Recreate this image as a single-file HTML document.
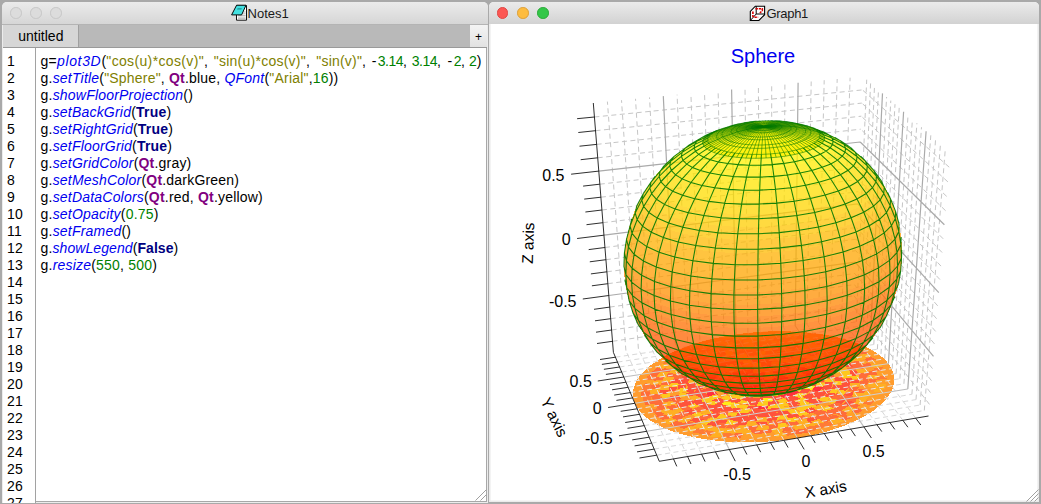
<!DOCTYPE html>
<html><head><meta charset="utf-8"><title>Sphere</title>
<style>
html,body{margin:0;padding:0}
body{width:1041px;height:504px;background:#a9a9a9;position:relative;overflow:hidden;font-family:"Liberation Sans",sans-serif;}
.win{position:absolute;top:2px;background:#fff;border-radius:5px 5px 0 0;overflow:hidden}
#w1{left:2px;width:485.5px;height:500.6px;background:#ececec}
#w2{left:489px;width:550px;height:499.6px;background:#fff;box-shadow:inset 1.6px 0 #ebebeb,inset -1.6px 0 #ebebeb,inset 0 -1.6px #ebebeb}
.tb{position:absolute;left:0;top:0;right:0;height:22px;background:linear-gradient(#ebebeb,#d6d6d6);border-bottom:1px solid #b4b4b4}
.tl{position:absolute;top:5.1px;width:11.6px;height:11.6px;border-radius:50%;border:1px solid #c6c6c6;background:#dcdcdc;box-sizing:border-box}
.ttl{position:absolute;top:4px;font-size:13px;line-height:15px;color:#1a1a1a;white-space:nowrap}
#tabbar{position:absolute;left:1px;top:23px;width:484px;height:22px;background:#b9b9b9;border-bottom:1px solid #9a9a9a}
#tab{position:absolute;left:0;top:0;width:75px;height:22px;background:#d6d6d6;border-right:1px solid #a0a0a0;font-size:14px;line-height:23px}
#tab span{position:absolute;left:15.3px;top:0}
#plus{position:absolute;right:0;top:0;width:17px;height:22px;background:linear-gradient(#f4f4f4,#e2e2e2);font-size:12px;line-height:25px;text-align:center}
#ed{position:absolute;left:1px;top:46px;width:483px;height:453px;background:#fff;border-right:1px solid #a8a8a8;border-bottom:1px solid #a8a8a8}
#gut{position:absolute;left:0;top:0;width:32px;height:456px;background:#fff;border-right:1px solid #a2a2a2}
.ln,.code{position:absolute;top:5px;font-size:14px;letter-spacing:0.2px;line-height:17px;white-space:pre;color:#000}
.ln{left:4px}
.m{letter-spacing:-.47px}
#L12{letter-spacing:.08px}
.L{height:17px;position:relative;width:max-content}
.code{left:37.6px}
.f{color:#0000f0;font-style:italic}
.s{color:#808000}
.n{color:#007f00}
.q{color:#800080;font-weight:bold}
.k{color:#000080;font-weight:bold}
</style></head>
<body>
<div class="win" id="w1">
 <div class="tb"></div>
 <div class="tl" style="left:8.2px"></div><div class="tl" style="left:28.2px"></div><div class="tl" style="left:48.2px"></div>
 <svg style="position:absolute;left:228px;top:2px" width="20" height="20" viewBox="230 4 20 20"><path d="M236.5 5.5H246.5V20.2H236.5Z" fill="#fff" stroke="#111" stroke-width="1"/><path d="M242.5 12H245.6M241.8 13.8H245.6M238 15.5H245.6M238 17.1H245.6M238 18.6H245.6" stroke="#b8b8b8" stroke-width=".9"/><path d="M236.6 5.2H246L241.6 14.9H231.6Z" fill="#43e0e0" stroke="#0a0a0a" stroke-width="1" stroke-linejoin="round"/><path d="M237.6 8.2H241.9L241.3 9.6H237Z" fill="#1f8f94"/></svg><div class="ttl" style="left:245.6px">Notes1</div>
 <div id="tabbar"><div id="tab"><span>untitled</span></div><div id="plus">+</div></div>
 <div id="ed">
  <div id="gut"><div class="ln">1
2
3
4
5
6
7
8
9
10
11
12
13
14
15
16
17
18
19
20
21
22
23
24
25
26
27</div></div>
<div class="code"><div class="L" id="L1">g=<span class="f" style="letter-spacing:.65px">plot3D</span><span style="margin-left:.1px">(</span><span class="s" style="letter-spacing:.35px">"cos(u)*cos(v)"</span>,<span class="s" style="margin-left:1.5px;letter-spacing:.25px"> "sin(u)*cos(v)"</span>,<span class="s" style="margin-left:2.2px"> "sin(v)"</span>,<span style="margin-left:1.4px"> -</span><span class="n m" style="margin-left:1.1px">3.14</span>,<span class="n m" style="margin-left:1.2px"> 3.14</span>,<span style="margin-left:2.2px"> -</span><span class="n m" style="margin-left:1.3px">2</span>,<span class="n m" style="margin-left:.5px"> 2</span><span style="margin-left:.5px">)</span></div><div class="L" id="L2">g.<span class="f">setTitle</span>(<span class="s">"Sphere"</span>, <span class="q">Qt</span>.blue, <span class="f">QFont</span>(<span class="s">"Arial"</span>,<span class="n">16</span>))</div><div class="L" id="L3">g.<span class="f">showFloorProjection</span>()</div><div class="L" id="L4">g.<span class="f">setBackGrid</span>(<span class="k">True</span>)</div><div class="L" id="L5">g.<span class="f">setRightGrid</span>(<span class="k">True</span>)</div><div class="L" id="L6">g.<span class="f">setFloorGrid</span>(<span class="k">True</span>)</div><div class="L" id="L7">g.<span class="f">setGridColor</span>(<span class="q">Qt</span>.gray)</div><div class="L" id="L8">g.<span class="f">setMeshColor</span>(<span class="q">Qt</span>.darkGreen)</div><div class="L" id="L9">g.<span class="f">setDataColors</span>(<span class="q">Qt</span>.red, <span class="q">Qt</span>.yellow)</div><div class="L" id="L10">g.<span class="f">setOpacity</span>(<span class="n">0.75</span>)</div><div class="L" id="L11">g.<span class="f">setFramed</span>()</div><div class="L" id="L12">g.<span class="f">showLegend</span>(<span class="k">False</span>)</div><div class="L" id="L13">g.<span class="f">resize</span>(<span class="n">550</span>, <span class="n">500</span>)</div></div>
 </div>
</div>
<div class="win" id="w2">
 <div class="tb" style="height:21.6px;border-bottom:none;background:linear-gradient(#ebebeb,#d2d2d2)"></div>
 <div class="tl" style="left:7.9px;background:#fc5753;border-color:#df4744"></div><div class="tl" style="left:28px;background:#fdbc40;border-color:#de9f34"></div><div class="tl" style="left:48px;background:#33c748;border-color:#27aa35"></div>
 <svg style="position:absolute;left:259px;top:2px" width="20" height="20" viewBox="748 4 20 20"><path d="M755.3 6.2H764.6V14.7L758.9 20.5H750.3V11.4Z" fill="#fff" stroke="#000" stroke-width="1.1" stroke-linejoin="miter"/><path d="M756.2 6.2V14H764.6M756.2 14L750.5 20.3" fill="none" stroke="#000" stroke-width="1"/><path d="M755.5 8.8H762.3V10.6L759.9 13M752.9 11.6V16.4L754.3 17.3H758.2" fill="none" stroke="#d80000" stroke-width="1.6" stroke-dasharray="2.4 .9"/></svg><div class="ttl" style="left:277.4px;letter-spacing:-.28px">Graph1</div>
</div>
<svg width="1041" height="504" viewBox="0 0 1041 504" style="position:absolute;left:0;top:0">
<style>.gm{stroke:#c6c6c6;stroke-width:1;fill:none;stroke-dasharray:5 3.5}.gM{stroke:#aaa;stroke-width:1.2;fill:none}.fm{stroke:#d8d8d8;stroke-width:1;fill:none;stroke-dasharray:5 3.5}.fM{stroke:#bdbdbd;stroke-width:1.1;fill:none}.ax{stroke:#0a0a0a;stroke-width:0.85;fill:none}.lb{font-family:"Liberation Sans",sans-serif;font-size:16px;fill:#000}</style>
<path class="gm" d="M625.9 350.6L607.4 101.6M612.5 341.3L853.5 306.6M638.4 348.8L621.5 100.2M611.6 330L853.9 295.7M650.8 346.9L635.5 98.8M610.7 318.7L854.4 284.6M663.1 345.1L649.5 97.4M609.7 307.1L854.8 273.5M687.6 341.6L677.1 94.7M607.8 283.7L855.8 250.7M699.8 339.8L690.9 93.4M606.9 271.8L856.2 239.2M711.9 338L704.5 92M605.9 259.7L856.7 227.5M724 336.3L718.1 90.7M604.9 247.5L857.2 215.7M747.9 332.8L745 88M602.9 222.7L858.2 191.7M759.8 331L758.4 86.7M601.9 210L858.7 179.5M771.7 329.3L771.7 85.4M600.9 197.2L859.2 167.1M783.5 327.6L784.9 84.1M599.8 184.2L859.7 154.6M806.9 324.1L811.2 81.5M597.7 157.8L860.7 129.2M818.5 322.4L824.2 80.2M596.6 144.4L861.3 116.2M830.1 320.8L837.2 79M595.5 130.7L861.8 103.1M841.6 319.1L850.1 77.7M594.4 117L862.4 89.9M924.3 410.5L945.4 147.9M929.5 404.4L853.5 306.6M920.1 405L940.5 143.7M930.5 392.6L853.9 295.7M916 399.6L935.6 139.4M931.5 380.7L854.4 284.6M911.9 394.3L930.8 135.3M932.5 368.6L854.8 273.5M903.9 383.8L921.5 127.2M934.5 343.9L855.8 250.7M899.9 378.7L916.9 123.2M935.6 331.4L856.2 239.2M896.1 373.6L912.4 119.3M936.6 318.7L856.7 227.5M892.2 368.6L908 115.5M937.7 305.8L857.2 215.7M884.7 358.8L899.2 107.9M939.9 279.5L858.2 191.7M881 353.9L895 104.2M941 266.1L858.7 179.5M877.4 349.2L890.8 100.6M942.1 252.5L859.2 167.1M873.8 344.5L886.6 97M943.2 238.8L859.7 154.6M866.7 335.2L878.5 90M945.6 210.7L860.7 129.2M863.2 330.7L874.5 86.5M946.7 196.4L861.3 116.2M859.8 326.2L870.6 83.1M947.9 181.9L861.8 103.1M856.4 321.8L866.7 79.7M949.2 167.2L862.4 89.9"/>
<path class="gM" d="M675.4 343.4L663.3 96.1M608.8 295.5L855.3 262.2M736 334.5L731.6 89.4M603.9 235.2L857.7 203.8M795.2 325.8L798.1 82.8M598.8 171.1L860.2 142M907.8 389L926.1 131.2M933.5 356.3L855.3 262.2M888.4 363.6L903.6 111.7M938.8 292.7L857.7 203.8M870.2 339.8L882.5 93.4M944.4 224.8L860.2 142"/>
<path class="fm" d="M673.5 458.9L625.9 350.6M656.7 455.2L924.3 410.5M687.6 456.6L638.4 348.8M654.2 449.1L920.1 405M701.6 454.2L650.8 346.9M651.6 443.1L916 399.6M715.5 451.9L663.1 345.1M649.1 437.2L911.9 394.3M743.1 447.2L687.6 341.6M644.2 425.6L903.9 383.8M756.8 444.9L699.8 339.8M641.9 419.9L899.9 378.7M770.5 442.6L711.9 338M639.5 414.3L896.1 373.6M784 440.3L724 336.3M637.2 408.8L892.2 368.6M810.9 435.8L747.9 332.8M632.6 397.9L884.7 358.8M824.3 433.6L759.8 331M630.3 392.6L881 353.9M837.5 431.3L771.7 329.3M628.1 387.3L877.4 349.2M850.7 429.1L783.5 327.6M625.9 382.2L873.8 344.5M876.9 424.7L806.9 324.1M621.6 372L866.7 335.2M889.9 422.5L818.5 322.4M619.5 367L863.2 330.7M902.9 420.4L830.1 320.8M617.5 362.1L859.8 326.2M915.7 418.2L841.6 319.1M615.4 357.2L856.4 321.8"/>
<path class="fM" d="M729.3 449.5L675.4 343.4M646.7 431.3L907.8 389M797.5 438.1L736 334.5M634.8 403.3L888.4 363.6M863.9 426.9L795.2 325.8M623.8 377L870.2 339.8"/>
<g shape-rendering="crispEdges"><path fill="#ff9c2e" d="M888.4 363.6L885.5 360.3L882.1 357L878.1 354L873.6 351L868.7 348.3L863.3 345.7L857.5 343.3L851.3 341.1L844.7 339.2L837.8 337.4L830.6 335.8L823.1 334.5L815.3 333.4L807.4 332.5L799.3 331.9L791 331.5L782.6 331.3L774.2 331.3L765.7 331.6L757.1 332.2L748.6 332.9L740.2 333.9L731.8 335.1L723.6 336.6L715.5 338.2L707.6 340.1L699.9 342.2L692.5 344.5L685.4 347L678.6 349.7L672.2 352.5L666.1 355.5L660.5 358.7L655.3 362L650.6 365.4L646.3 368.9L642.7 372.6L639.5 376.3L637 380.1L635.1 384L633.7 387.8L633 391.7L633 395.6L633.6 399.5L634.8 403.3L636.8 407L639.4 410.7L642.6 414.3L646.5 417.7L651 421L656.2 424.1L661.9 427L668.2 429.7L675.1 432.2L682.4 434.4L690.3 436.4L698.5 438.1L707.1 439.5L716.1 440.7L725.3 441.5L734.7 442.1L744.3 442.3L754 442.2L763.8 441.8L773.5 441.1L783.2 440.1L792.8 438.8L802.2 437.3L811.3 435.4L820.2 433.3L828.7 430.9L836.9 428.3L844.6 425.5L851.9 422.5L858.7 419.3L865 416L870.7 412.5L875.8 408.9L880.3 405.1L884.2 401.4L887.5 397.5L890.1 393.6L892.1 389.8L893.4 385.9L894.2 382L894.2 378.2L893.7 374.4L892.5 370.7L890.8 367.1Z"/>
<path fill="#ff303e" d="M764.7 383L771.4 380.6L764.1 378.9L764.6 382.4ZM765.3 383.1L755.9 381.9L757.3 385.3L763.8 383.4ZM763.9 382.9L757.1 385.4L765.5 387L764.5 382.6ZM764.8 378.8L765.1 376L752.9 378.1L757.7 380.5ZM755.2 384.1L746.7 385L753 389L758.3 386.6ZM764.9 387.2L767.1 389.9L776.6 387.2L771.6 385.3ZM772.3 382.8L782.3 381.7L775 378.1L769.4 380.1ZM780.5 378.6L785.7 376.7L777.7 372.7L773.1 376.2ZM757.9 376.3L754 373.6L742.7 378.3L752.3 378.9ZM750.1 379.2L742.9 376.9L737.4 382.9L748.5 382.7ZM747.7 382.6L739 382.8L740.1 387.3L748.4 386.5ZM782.7 381L791.6 380.9L788 376L778.1 378.4ZM790.1 385.4L796.8 386.6L800.2 381.1L789.6 381.4ZM731.8 388.9L722.7 390.4L724.5 394L734.1 392.5ZM778.4 395.3L784.3 398.1L792 396.9L788.2 393.9ZM786.1 394.1L791.9 396.2L800.6 391.9L792.1 390.6ZM799.1 370.6L809.2 369.1L800.8 366.1L794.5 369.1ZM806.5 377.9L816.2 376.2L812.6 371.9L805.4 374.2ZM816.1 374.8L823.5 374.1L820.2 370.3L810.4 371.6ZM715.4 391.4L706.6 392.5L708.4 397.1L718 395.1ZM757.1 406.3L757.1 409.4L767.1 409.1L768.7 405.1ZM812.3 390.2L818.4 392.3L824.4 386.9L814 386.2Z"/>
<path fill="#ffc71d" d="M765 383.4L763.2 379.6L756.4 382.4L764.7 382.7ZM764.6 382.7L765.9 387L773.6 384.2L765.9 382.7ZM763.6 383L772.8 384.1L771.3 380.8L765.9 382.9ZM759.9 380.3L753.5 378.3L746.3 383.2L755.9 383.8ZM758.5 386.3L754.4 388.6L764.2 390.8L765.8 386.1ZM752.2 388.8L745.5 392L757.4 394.5L758.7 391ZM779.7 385.7L790.3 385.4L791 380.8L783.3 380.8ZM790 378.3L798.7 376L794 372.1L785.2 375.9ZM771.5 372.4L775.6 367.9L760.8 369.4L762.6 372.3ZM763.6 372.7L764 368.6L752.4 370.2L754.3 373.1ZM738.8 382.1L730.8 382.6L731.7 387.1L739.8 386.2ZM741.7 389.8L733.5 392.3L740.1 395.2L747.5 392.3ZM786.5 388.8L792.9 391.1L797.2 385.3L789.1 385.1ZM790.2 381.7L799.4 380.7L796.5 376.2L788.1 378.4ZM796.5 376.1L805.9 374.7L798.9 370L793.6 372.7ZM790.9 373.6L800.2 370.5L792 367.7L786.7 370.8ZM734.5 377.2L727 375.6L723.8 380.6L730.7 381.4ZM731.7 381.5L723.3 380.5L722.7 385.6L729.4 385.3ZM728.8 384.4L720.6 385.1L723.2 390.3L729.9 388.6ZM732.5 392.1L727.2 394.2L733.8 397.4L739.7 394.4ZM739 394.6L731.2 397.1L740.2 400L747.5 396.2ZM794.1 390.5L800.2 391.7L806.3 387L797.1 387.1ZM797.7 382.7L808.4 383.4L808.7 378L800.2 379.3ZM800 379.3L806.5 378.5L803.5 374.4L795.6 375.9ZM795.8 368.8L800.8 365.3L792 364L788.5 367ZM779.7 365.4L783.5 361.9L772 361.8L772.9 365.2ZM753.3 366L749.5 362.9L741.1 364.9L745.5 367.8ZM737.5 370.4L732.1 368.3L723.8 371L732.6 373.3ZM726.6 376.6L719.1 375.6L716.2 379.5L724.7 381.1ZM722.4 380.3L713.8 380L710.7 384.9L719.8 384.3ZM721.5 384.6L713.8 383.7L713 389.9L722.1 388.7ZM726.1 395.2L721 398.3L727.9 400.5L732.2 397.7ZM739.8 400.4L736.6 402.8L747 404.4L750.7 400.8ZM758 402L755.3 406.2L767.5 405.8L768.6 400.9ZM777.6 400.1L780.8 404L790.7 400.9L783.4 398.3ZM793.5 395.5L798.7 398.1L807.5 394.5L800.9 392.7ZM807.8 381.3L818.8 381.1L816.3 375.7L805.9 377.6ZM811.1 371.9L821.1 370.1L815.5 366L808.3 369.2ZM808.7 369.1L813.2 366.1L809.7 363.7L801.6 366.1ZM795.5 364.4L799.4 361L792 358.8L785.9 362.5ZM787.4 362.8L790.7 360.2L781.5 358L779.9 361.7ZM778.9 361.2L782.9 358.1L770.8 357.5L768.4 361.4ZM729.5 369L722.8 367.1L716.4 370.5L722.6 372.1ZM716.4 394.3L708 396.8L712.7 400L721.6 398ZM734.8 401.9L728.1 406.3L735.4 409.1L741.1 405ZM740.5 404.7L736.6 407.5L746.2 409L750.1 405.7ZM768.7 405L768.1 409.1L779.4 407.9L778.6 403.6ZM778.9 403.6L778.7 408L789 405.2L786.3 402.2ZM794.7 399.8L799.9 402.9L808.3 399.4L801.9 397ZM816.4 385.5L824.9 387.2L825.1 383.2L817.4 382ZM817.4 379L825.8 378.4L823.9 373.6L814.4 375.4ZM820.5 370.6L830.5 369.7L825 365.9L816.8 367.8ZM798.7 360.4L804.4 357.1L793.5 356.4L792.1 359ZM763.5 358L764.5 354.9L753.5 356.2L754.1 359.5ZM756 358.9L752.4 355.5L743.2 357.6L746.7 360.6ZM747.4 360.6L742.4 357.7L732.9 359.1L738.4 361.8ZM716.9 370.8L710 368.5L703.9 372.7L710.6 374.1ZM706.9 378.2L699.3 377.2L695.2 381.7L705.2 381.7ZM706.2 381.1L695.3 382L695.6 386.2L705.2 384.8ZM707.1 397L699.6 399.6L703.9 402.6L713.6 400.4ZM711.8 399.9L705.9 401.9L712.6 405.3L718.3 403ZM741.9 408.7L736.8 412.8L747.6 412.9L752.8 409.1ZM780.1 407.6L781 411.7L790.3 409.1L790.7 406.1ZM798.2 403.3L802.1 406.3L811.7 402.5L804.5 401.3ZM824.8 382.4L833.2 381.9L834.9 378.2L824.6 379.3ZM828 370L836.6 367.7L832.2 365.1L825.9 366.8ZM825.9 366.7L833 364.9L826.2 361.1L818.3 363.8ZM818.6 363L827 361.7L820.9 358.7L814.1 360.6ZM814.3 360.7L821.4 358.5L812.4 356.6L806.4 358.2ZM807.6 358.3L813.8 356.6L805.4 353.2L800 356.9ZM800 357L803.7 353.4L797.1 352L793.9 355.7ZM765.8 354.2L765 351.3L758 351.8L758.4 355.2ZM747.2 357.1L746 353.8L736.9 355.1L737.9 357.9ZM730.5 360.4L727.4 357.6L719.1 359.6L724.5 363ZM716.5 366L709.5 363.6L703.7 366.8L710.3 368.5ZM705.6 372L698 370.2L693.9 374.9L700.5 375.9ZM729.5 412.5L725.4 414.6L736.1 416.3L738.3 412.6ZM787.6 410L791.2 413.6L799.2 412.1L794.2 408.9ZM795.1 408.2L801.7 412.1L810.1 409L803.9 405.5ZM803 405.8L809.3 409L818.1 405.8L810.9 403.3ZM817.7 400L825.9 401.5L830.1 397.7L823.2 396.3ZM828.9 392L835.3 394.6L839 388.7L830.2 387.8ZM833.8 384.9L840.9 384.8L841.8 380.1L834.7 380.8ZM830.2 373L839.1 372.8L836.2 367.8L829.9 369.2ZM831.8 363.6L838.1 361.8L832.4 358.4L824.9 360.6ZM818.8 358L825.9 355.9L820.4 352.9L812.4 356.5ZM773.1 350.7L770.9 347.7L764.1 348.1L762.7 351.2ZM735.7 355.5L731.4 352L722 354.2L729.3 357.1ZM718.8 360.2L715 357L709.3 360L714 362.3ZM695.8 372.3L689.2 371.5L684.4 375.1L690.3 375.9ZM687.2 387.3L678.8 388.5L678.9 393.4L685.6 391.5ZM688.2 392.2L678.9 393.7L678.3 398L687.7 396ZM695.2 402.9L688.7 405.9L690.6 409.2L700.3 405.5ZM720.2 413.9L715 417.1L724.2 419.9L727.3 415ZM776.2 416.6L777.4 419.6L788.9 418.9L787.1 414.9ZM794.3 413.2L798.9 416.2L808.9 414L805.7 409.8ZM826.1 401.4L833.2 404.3L839 400.2L830.8 398ZM837.5 394.4L843 395.6L847.2 389.8L838.2 390.6ZM841.1 377.5L850.1 377.8L851.4 373.1L843.1 374.2ZM842.8 374.3L851.4 373.2L848.3 368.6L837.4 370.3ZM737.4 351.8L734.3 347.9L722.7 351.4L726.4 353.7ZM692.1 367.3L686.4 366.2L680.6 370.5L689.4 371.1ZM678.9 382.2L668.5 382.1L667.9 387.5L678.3 386.6ZM695.8 412L692.2 414.4L697.6 418L704.9 414.5ZM710.9 417.5L706.4 420.8L715.1 422.3L719.4 418.9ZM728.5 419.8L724.8 423.2L733.6 425.1L736.5 421ZM786.2 418.5L789.4 422.9L799 420.3L796.6 416.6ZM821.2 408.6L826.9 412.2L835.4 408.7L828.4 405.7ZM852.8 379L860.2 378.8L859.7 374L849.4 375.8ZM669.8 393.3L660.8 394.7L662.8 398.9L670 396.7ZM702.2 420.2L697.1 422.5L708 425.4L712 421.3ZM775.2 423.8L778.3 428.3L787.2 426.6L785.7 423.3Z"/>
<path fill="#ffea18" d="M771.7 380.2L774.1 377.3L762.6 376L764.2 380ZM774.8 376L778.8 372.2L764.4 372.3L764.6 375.4ZM777.4 387.6L781.9 391.1L788.6 385.9L780.2 385.8ZM741.4 379.2L734.6 377.8L729.8 382.7L737.9 382.2ZM747.4 392.5L741.9 394.9L748.9 397.5L754.2 393.3ZM770.2 393.1L772.4 397.7L781.9 394.8L777.2 391.7ZM779.2 368.9L784.3 365.9L772.5 364.5L771.4 368.7ZM761.4 368.9L763 365L750.5 367L753.4 370.5ZM762.7 397.5L762.1 401.5L773.7 400.9L769.8 396.8ZM763.3 365L762.2 362L752.3 363.3L753.6 366.8ZM744.7 368.4L739.6 365L731.8 368.3L737.8 370.3ZM731.2 373.8L722.7 372.3L717.6 375.9L726.3 377.2ZM804.3 389.1L810.6 390.3L816.2 385.4L805.7 384.7ZM802.4 365.5L807.9 363.5L799.8 361.2L794.9 364.1ZM752.2 363.1L750.1 360.1L741.8 361.7L744.2 364.7ZM736.7 367.1L732.5 363.3L722.9 367L728.6 369.4ZM714.8 378.9L706.9 378.4L703.4 382.9L714.2 383.3ZM726.9 401.4L719.6 404.2L728.7 405.7L733.6 403.1Z"/>
<path fill="#ff533b" d="M772.4 384.9L776 387.7L781.2 382L773.1 382.6ZM764.2 375.3L766.7 371.3L755.9 373.5L757.8 377.4ZM749 386.6L740.8 387L747.3 391.4L751.5 388.8ZM761.1 390.1L755.1 394.3L768.3 394.3L766.8 390.1ZM769.7 390.4L771 393.4L779 390.9L776 388.4ZM784.2 375.5L793.1 372.2L785.5 369.4L777.6 373.8ZM780.2 372.8L784 370.4L773.8 368.7L772.8 372.6ZM753.7 373.4L752.4 370.1L741.1 373L746.6 375.7ZM747.9 375.4L743.7 373.8L734.3 377.7L743.2 378.8ZM738.5 386.7L728.8 386.9L734.5 392.2L742 389ZM762.8 394.6L761.9 398.5L774.9 397.3L771.7 393.7ZM777.4 391.5L784 394.2L790.9 391.4L786.2 388.8ZM787.8 370.8L792 367.4L782.6 365.5L779.8 369.8ZM772.8 368.5L772.4 365.2L761.1 365.5L763.7 368.2ZM754.9 369.3L751.8 367.2L741.2 369.5L747.1 371.4ZM744.7 371.8L741.3 369.3L735 372.4L740.6 373.9ZM740 373.9L734.4 371.7L727.5 376.3L733.8 378.2ZM745.5 396.4L741.6 399.3L750.1 402.5L754.4 397.8ZM754.3 397.7L751.4 401.4L762.2 402L763.2 397.4ZM771.8 396.6L773.1 401.2L782.1 398.5L779.5 395.3ZM796.4 387.2L804.1 388.1L808 382.5L798 382.8ZM804.1 374.4L814 372.5L807.2 368.8L800.3 371.1ZM788.3 367.2L790.8 363.8L783.7 361.7L780.5 364.9ZM770.5 365.3L771.6 361.4L760.1 361.5L761 365.7ZM733.1 397.8L727.7 400.8L737.1 403L742 400ZM750.5 401.9L745.7 404.8L757.3 405.7L757.9 401.6ZM768.2 402.1L768.3 405.8L779.8 403.4L777.1 400.8ZM784.9 398.8L788.6 402.4L800.4 398.6L792.6 395.3ZM798.7 392.3L805.6 394.1L811.8 389.9L803.9 388.4ZM807.1 385.3L815.4 386.6L816.1 381L808.5 382.2ZM769.3 360.9L769.8 358.1L761.2 358.6L761 362.6ZM763 362.2L760.7 358L750.4 359.3L753.1 363.4ZM743.9 363.9L742 361.7L732.9 364.6L736 366.9ZM724.2 372.2L717.1 370.6L710.2 375.5L717.5 376.3ZM716.7 375.9L709.8 374.3L707.3 379.4L714.7 379.4ZM713.1 383L704.1 383.1L702.8 387.5L712.5 387.3ZM713.1 387.8L702.4 388.9L706.6 392.5L713 390.5ZM719.7 397.6L711.4 400.2L720.9 404L725.4 400.6ZM749 405.5L746.3 408.9L757.5 410.4L759.5 406ZM785.8 402.1L789.6 405.1L800.3 403.5L793.3 400.7ZM802.6 397L808.2 399.4L814.1 395.9L808.2 393.7ZM808.1 394.2L814.4 395.4L819.7 392.2L813.3 389.8ZM816.8 383L823.3 382L825.7 378.3L816.7 378.7ZM815.9 368.8L824.8 366L818.3 361.8L811.3 364.6ZM810.6 365.3L817.2 362.4L811.8 359.9L805.7 362.6ZM805.3 362.4L809.6 359.3L802.4 357.7L797.7 360.5ZM791.2 358.8L793.9 356.1L784.3 354.5L780.7 358.6ZM774 357.5L775.1 354.1L763.5 354.9L764 357.7ZM738.8 362.5L734.2 360L725.1 362.3L728.9 364.8ZM730.2 364.8L724.5 362.3L717.3 365.2L723.9 367.2ZM724.2 366.8L717.6 364.9L709.3 368.7L717.2 370.4ZM709.2 373.7L703.6 372.8L699.7 377.7L707.9 377.7ZM703.3 385.4L694.4 386.2L693.9 390.5L702.8 389.2ZM704.9 389.6L696.5 390L696 395.3L705.1 393.4ZM705.6 392.6L695.1 394.5L700.4 398.9L708.6 396.6ZM717.8 402.9L711.6 406.5L720 408.7L726.2 405.6ZM726.7 405.9L718 409.6L727.3 412.1L732.4 408.2ZM733.9 407.9L726.6 411.4L739.8 412L741.7 408.7ZM752.2 410.1L748.4 413.3L759.6 413.6L761.7 409ZM759.8 410L761.1 412.5L771.3 413.3L771.2 408.5ZM768.5 408.7L769.7 413.3L780.6 411.9L779.9 407.8ZM788.9 406.5L792 409L800.8 406.2L795.7 403.7ZM805 400.5L810.9 403.6L816.4 400.1L811.9 397ZM812.3 397L819.5 398.9L823.8 395.7L816.5 394.2ZM816.3 394L823.3 395.8L830.1 391.4L820.2 390.6ZM821.6 390.2L830.9 390.7L831.6 386.6L823.1 386.2ZM823.8 386.4L832.1 387.4L832.8 382L825.6 381.8ZM824.5 378.7L834.7 377.1L832.7 374.1L823.9 374.8ZM823.8 374.3L832.4 373.2L827.9 369.6L821.3 370.7ZM790.5 355.6L795.5 352.7L786.4 351.5L783 355.4ZM783.6 355L787.2 351.3L777 351.6L775.8 355.1ZM757.7 354.9L755.1 351.7L747.7 352.8L747 356.6ZM739.2 358L737.4 355.5L726.7 356.8L732.4 359.8ZM710.5 368.5L705 366.8L699 370.7L706.6 371.9ZM702.1 375.4L691.7 374.3L688.3 378.9L696.2 379.2ZM697.1 382.6L687.2 383.4L687.8 388L694.2 387.8ZM694 387.6L687.1 387.7L687.3 391.6L694 391.6ZM696 391.3L685.4 393L689.2 396.4L698 394.2ZM700 398.1L690.2 400.6L696.9 404.8L702.4 401.5ZM703.9 401.4L696.6 404L702.2 407.7L708 404.3ZM710.9 404.8L701.3 407.2L709.1 411.2L716.5 407.2ZM715 407.2L709.5 410.3L716.5 413.8L724 409.3ZM737.9 412.5L735.3 417.5L746.9 418.2L749.2 412.9ZM750.3 412.9L748.4 417.8L756.4 417.6L759.7 413.2ZM757.2 413.8L758.7 417.3L769.9 416.8L767.8 412.4ZM769.6 413.1L767.2 417L780 415.9L777.8 412.6ZM777.9 411.9L777.9 415.3L791.1 413.4L786.2 410.7ZM811 402.5L816 405.8L823.3 402.5L818.7 399.8ZM823.6 396.3L831.7 397.6L836.3 393.6L828.8 392.9ZM831.5 388.5L839.9 388.9L841.8 384.9L833.6 385ZM834.8 381L843.6 380.6L841.8 376.1L834.3 377.4ZM826.5 361L834.3 358.4L825.1 355.3L819.5 358.1ZM812.8 355.9L819.8 353.3L808.8 351.1L805.5 354.9ZM779.9 351.5L783.3 347.5L773 348.1L771.7 350.8ZM754.6 351.8L752.8 349.3L743.3 350.2L746.5 353.9ZM744.5 353.4L743.1 349.9L732.6 352.7L736.9 355.2ZM714.2 361.6L708 360.5L699.7 363.3L705.7 364.9ZM699.9 369L696.1 367.8L686.8 371.1L696.1 372.5ZM693 376.2L682.3 375.9L681.1 379.6L688.5 379.8ZM689.5 380.3L680 379.1L678.1 384L688.3 384.3ZM685.9 384.8L677.9 384.5L678.4 388.8L685.8 387.6ZM689.9 399.6L681.1 401L686.6 405.8L694.3 403.4ZM712.2 411.1L705.2 415.7L716.4 417.9L721 413.5ZM726.5 415.9L726.5 418.9L733.9 420.3L737.2 417.3ZM739.2 416.4L732.9 420.6L745.6 421.2L746.5 417.5ZM747 417.3L743.4 421.3L757.4 420.7L757 416.9ZM768.6 416.8L766.3 420.8L776.1 420.3L778.4 416.5ZM786.8 414.7L787.7 418.2L799.8 416.5L795.5 412.7ZM803.4 410.4L809.3 413.9L818.5 410.1L811.5 407.4ZM838.2 389.7L846 390.8L851.1 386.1L841.2 386.2ZM842.4 386L849.6 385.9L850.1 382.1L842.2 382.6ZM841.7 381.5L849.7 381.9L852.8 378L841.4 378.8ZM847.2 367.4L853.9 367.4L850.1 362.3L842.8 364.3ZM837.7 361.5L845.2 359L841.5 355.7L832.8 358.2ZM813 352.6L819.6 348.9L809.1 347.6L806.7 350.1ZM797.2 348.3L801.2 346.3L792.1 344.6L788.9 349ZM780.4 348.1L782.8 344.4L771.6 343.9L771.3 348.2ZM772.7 348.1L773.7 344.9L760.9 344.7L761.8 349ZM762 348.4L761.1 344.4L752.1 345.8L754 349.5ZM727 354.2L723.4 350.1L715.9 353.6L719 356.2ZM711.3 358.5L706.1 356.3L698.2 359.4L703.9 361.3ZM687.4 371.6L680.7 369.3L677.2 374L683 374.8ZM679.1 378.9L671.8 378.7L670.5 382.5L679.9 383ZM677 387L667.5 386.6L669.6 390.8L676 390.8ZM678.9 395.1L669.8 396.5L672.7 399.9L680.9 398.8ZM684 401.9L675.7 404L677.9 407.5L687.3 406.4ZM690.1 408.7L683.9 411.5L690.6 415.3L697.6 411.5ZM719.6 419L713.7 422.5L724.2 424.5L727.6 420.7ZM739 419.9L734.9 424.8L745.7 425.3L748.2 421.1ZM755.6 421.7L758.2 425.5L768.3 425L766.2 421.8ZM835.2 402.9L840.3 404.9L845.6 400.3L837.7 398.5ZM842.6 395.4L853.5 397L854.6 392.5L847.1 391.8ZM849.8 383.9L859.4 383.9L859.5 379.4L851.3 379.8ZM851.8 375.9L857.8 375.3L856.7 370.9L848.9 371.6ZM798.1 345.7L800.2 342.1L792 341.2L787.4 344.5ZM698.1 360.4L691.7 358L684.8 361L692 362.8ZM669.3 388.8L660.5 389.4L658.8 394.4L667.9 393.4ZM694.4 417.9L690.4 420.5L696.8 423.2L704.5 419.1ZM711.3 421.3L706.7 424.7L716.5 426.1L720.9 422.7ZM805.5 419L810.3 423L818.8 420.5L815.4 415.7ZM842.4 404.8L849 406.5L854.4 402L847.7 400.2Z"/>
<path fill="#ff6c39" d="M775.9 354.5L776.8 350.7L766.6 351L765 354.3ZM723.2 410.5L716.2 413.2L727.1 415L730.1 411.7ZM806.3 354.8L810.7 351.2L801.3 349.1L797.4 352.5ZM798 352.7L801.1 349.4L791 348.3L789.3 351.4ZM764.1 351.2L762.8 347.5L751.7 349.6L753.3 351.8ZM729.1 357.1L723.5 355L715.4 357.4L721.1 359.9ZM701.2 406.3L693.4 408.6L698.9 412.2L705.7 409.3ZM831.4 398.3L837.7 399.6L841.8 394.9L836.8 393.2ZM790 348L790.7 345.1L782.1 345.1L781.6 347.7ZM745 349.7L741.6 347.1L733.2 348.4L737.5 352ZM683.1 375L676.1 374.6L672.2 378.4L681.1 379ZM678.3 398.3L671.7 399.7L674.6 404.1L682.7 402.2ZM686.3 405.9L677.4 408.5L683.5 412.3L692.1 408.3ZM702.6 414.6L698.7 418.1L706.2 420L712.3 416ZM769 421.4L769.1 424.5L777.9 423.5L775.4 420.3ZM776.5 420.7L779 423.5L787.7 423.4L785.3 419.7ZM795.3 416.9L800.3 419.7L808 418.5L803.3 415.3ZM812.2 412.1L818 415.9L827 411.7L821.2 410.2ZM827.8 405.8L833.6 408.3L843.4 404.4L835.4 402.4ZM838.6 399.1L849.3 400.9L852.2 396.8L842.6 394.7ZM848 391.4L855.9 391.6L858.9 387.2L849.6 387ZM850.1 371.3L857 370.3L855.1 366L847.1 368.4ZM852.8 366.3L862.6 364.2L857.8 360.9L850.4 362ZM833.8 354.5L841.4 351.3L834.1 348.4L827.6 351.6ZM790.7 344.5L791.8 341L780.2 340.6L781.2 344.5ZM772.7 343.9L770.9 341.2L761.8 341.9L762 344.6ZM763.6 344.2L761.4 341.1L754.3 342.5L753.9 345ZM744.8 346.9L741.8 343.4L734.7 344.5L735.4 347.9ZM735.6 348.3L733.3 345.3L723 347.6L728.6 349.3ZM727 349.8L724.5 346.4L715.7 349.4L720.2 351.7ZM704.4 357L699.4 354L692.6 357.6L697.8 359.8ZM686.3 366.3L679.1 365L674.4 368.9L679 369.9ZM677.2 373.8L668.1 373L666.4 376.8L673 377.7ZM670.9 381.2L660.4 381L660 385.6L670.3 385ZM669.9 397.4L660.8 398.3L664.6 402L672.1 401ZM674.2 404.3L666.8 406.6L669.5 411.2L678.4 408.4ZM682.5 411.3L677.1 413.2L683.4 417.1L691.3 414.6ZM720.9 422.4L713.3 427.3L724.3 428L728.8 424ZM729.1 425L725.5 427.9L734.8 429L739.3 424.9ZM748.9 425.8L745.9 429.3L755.2 430L758.2 425.8ZM768 425.2L767.9 429.2L776.6 428.5L778.7 424.1ZM784.9 422.7L789.8 425.9L799.8 424.2L798.2 421.3ZM812.7 416.9L818.6 419.9L828.7 416.8L823.7 414.1ZM822.5 413.3L827.7 417.7L834.8 413.6L830.5 409.9ZM827.4 410.5L836 413.9L842.3 409.8L835.9 407.9ZM834.6 408.1L843 410.1L848.9 405.8L844 403.7ZM847.9 400.6L854.8 402.3L860 397.6L851.9 396ZM854.1 392.2L863.4 393.6L867.9 389L857.8 389.3ZM858.3 384L867 384.7L869.3 381L860.8 380.5ZM859.6 380.2L868.4 381.1L866.7 375.8L859.3 377.2ZM859.9 377.3L866.7 376.1L868.4 372.3L857.2 372.5ZM857.6 369.8L865.4 367.8L860.3 364.4L854.3 365.5ZM828.4 347.5L833.8 344.8L826.7 342.9L821 345.3ZM821.5 346.4L828.4 342.3L819.1 340.6L814.9 343.5ZM787.2 341.5L791.8 338.5L782 338.2L779.5 341.4ZM779.2 341.7L782.1 337.9L771.5 338.6L772.9 341.2ZM743.7 343.1L742.7 340.3L732.8 342.1L736 345ZM728.2 346.6L723.4 343.9L715.3 345.3L719.8 347.7ZM720.1 348.6L715.7 345.6L706.7 347.1L710.7 350.3ZM710.1 351L707.1 347.7L697.3 351.2L702.3 352.7ZM694.8 355.9L692.4 353.3L683.4 356.5L688.4 358.1ZM673 369.8L663.8 368.1L660.5 371.7L667.8 373.1ZM664 377.3L655.3 377.1L652.9 380.7L662.5 380.2ZM662.1 384L651.3 385.4L650.5 389.9L658.7 388.5ZM660.5 392.3L651.7 393.6L652 398.6L659.5 397.6ZM662.3 397L653.1 398.3L653.9 402L661.7 400.6ZM661.5 400.4L653.3 402.4L656.6 406.3L664.5 405.1ZM663.2 404.3L656.8 406.5L658.4 410.7L667.3 408.9ZM678.1 414.3L669.8 417.5L676.7 421.1L684.3 418.3ZM688.5 420.9L683.1 423.5L691.4 426.6L696.5 424ZM751 429.8L750.6 434.3L762 433.9L763.7 430ZM761.8 429.3L762.5 433.9L772 432.3L772.4 429.3ZM782.1 427.8L782.2 431.7L795.6 430.1L790.5 426.7ZM819 420L824.4 423.1L833 419.5L827.1 416.8ZM829.4 416.4L831.4 420.6L840.2 417.1L834.5 414.5ZM835.9 413.6L842.6 416.9L847.5 413.2L841.7 410.4ZM847.7 407.2L856 409.1L861.1 404L852.3 403.7ZM869.9 383.5L876.9 382.6L876.6 378.3L869.3 379.1ZM867.1 376.2L878 375.3L874 370L867.6 371.9ZM863.2 368L873.1 366.2L870.3 362.5L862.3 364.5ZM867.1 362.1L876.3 359.5L871 356.9L864.3 358.7ZM860.1 354.4L868 353.3L862.5 350.1L855.2 351.8ZM821.4 341.3L825 339.1L814.9 337.1L812.2 340.4ZM805 338.9L806.8 336L798.2 335.5L795.9 338.6ZM770.2 337.5L768.8 335.2L761.2 335L761.4 337.9ZM701.2 349.1L697.4 347L689.1 349.6L695.4 352.2ZM665 368L658 366.8L653.3 371.1L661.7 372.2ZM660.7 372.4L652.6 370.4L648.7 375.9L657 375.8ZM649.5 391.8L640.9 392.3L641.4 396.6L652.2 396.5ZM653.1 400.5L644.1 401.5L645.7 405.7L655.7 404ZM662.3 411.5L653.5 412.5L657.7 416.6L664.1 414.2ZM667.1 414.2L656.4 416.5L662.6 419.8L671 418.1ZM676.5 421.1L668.7 423.6L675.4 427.5L684.5 423.3ZM684.7 423.4L676.8 426L685.1 429.6L688.3 426ZM734.8 433.4L731.4 437.1L740.9 437.7L742.9 433.3ZM793.3 430.6L794.9 434.6L808.8 432.4L803.4 428.4ZM838.8 418.1L841.8 420.8L852.6 417.9L845.8 414.4ZM851.5 411.7L856.9 413.7L863 410.1L855.9 407.3Z"/>
<path fill="#ffaf23" d="M698.3 378.8L689.7 378.8L687.8 383L694.7 382.8ZM696.2 395.5L688.5 396.7L693.2 400.7L701.1 398.1ZM840.3 370.2L848.5 369.5L842.7 365L834.7 366.7ZM790.5 351.5L793 348.8L781.9 348.3L780.9 351ZM705.9 365.5L699.1 363.6L693.9 367.4L702.2 369.2ZM705.9 409.6L698.6 412.4L707 414.4L714.1 412.1ZM758.3 417.9L755.7 421.8L766.9 420.6L765.6 417.3ZM813.4 408.1L815.8 410.6L825.2 407.2L820.4 404.1ZM843.3 364.6L851.4 363L846.6 359.1L837.6 362ZM834.4 358.1L838.9 355.8L832.9 353.6L826.9 355.4ZM820.6 353.6L826.6 351.2L817 349L813.7 351.6ZM806.1 350.7L809.4 347.7L802.4 346.4L796.9 348.9ZM753.2 349.3L754.2 344.9L744.8 346.9L744.2 349.8ZM720.7 355.8L715.7 352.6L706.4 356.4L712.4 358.2ZM705.2 361L700.5 359.4L692.4 362.1L698.2 364.5ZM697.4 364.1L692.3 362.2L686.2 365.9L694.2 367.7ZM748.2 421.2L745.4 425.8L756.4 425.7L755.9 422.2ZM851 387.6L857.9 387.3L860.1 383.3L849.9 383ZM849.9 361.8L857.6 361L851.8 357.9L844.4 359.7ZM846 359.2L852.3 358L845.8 355L839.6 356.3ZM839.2 357.1L847.8 353.4L841.6 351L835.3 353.1ZM827 351.4L833.2 349.1L825.8 346.3L819.9 349.5ZM820.6 349.4L827.5 346.7L817.6 344.6L813.5 347.8ZM813.8 348.1L818.8 345.3L809.5 343.7L806.6 346.4ZM805.6 347.2L811.1 343.5L802.1 342L797 346.1ZM719.6 351.9L715.7 348.6L707.7 351.4L713.1 354.2ZM693.3 363.2L683.8 361.7L678.9 364.2L687.4 366.7ZM681.2 370L673.1 368.6L668.5 373.3L675.7 373.6ZM674.8 377.6L664.3 376.2L663 381.4L670.3 382.1ZM669.5 384.7L660.9 385L659.9 390.4L668.6 389.6ZM672.7 401.5L662.7 403.1L665.2 406.4L676.9 404.7ZM679.8 407.9L671.4 411.1L674.9 413.4L685 411ZM738.2 425.8L736.3 429.3L745.6 429.8L747.3 425.5ZM758.5 426.2L756.1 430L769 429.4L768.4 425.7ZM796.6 421.1L800.3 425.3L807.9 422.8L806.7 418.6ZM852.2 396.4L860.1 397.7L863.9 393.1L853.2 392.3ZM858.1 373.3L867.1 372.7L866 368.5L856.2 369.5ZM858.1 361.1L866.2 358.3L860.6 356.3L853.4 358ZM853.5 357.6L860.3 355.1L855.4 352.5L847.3 355.2ZM847.8 355.3L855.9 352.2L849.1 350.3L843.7 351.9ZM843.2 352.1L848.3 349.8L843.7 346.9L836.2 349.4ZM837.7 349.6L841.4 347.2L834.7 344.9L828.4 347.6ZM815.4 344.5L819 340.6L809.7 339.5L807.4 342.6ZM797.7 342.1L800 339.1L790.9 338.7L788.3 341.2ZM762.5 340.9L762.5 338.3L753.7 339.2L752.2 342.5ZM752.4 342.7L753.1 338.4L744.5 340.1L743.2 343.6ZM737.3 344.7L732.2 342.2L724.9 343.5L726.5 346.6ZM702 352.7L696.9 350.4L691.7 353L696.2 356ZM690 358.2L683.9 356.9L678.1 360.4L684.5 362.1ZM683.5 361.7L674.6 360L671.6 363.1L676.2 365.3ZM677.3 365.9L670.8 363.8L665.3 367.9L673.1 368.5ZM668.6 372.5L660.1 371.6L656.9 376.9L666.3 376.2ZM662.8 381L653.1 380.6L652.4 384.1L660.5 384.6ZM659.9 388.3L650.2 388.8L650.6 394.2L658.4 393.6ZM667.7 407.9L660.2 410.7L664.4 414.2L674 411.5ZM673.9 411.2L665.5 414.3L670.7 418.1L676.1 414.3ZM683.9 417.4L678 421.1L684.1 423L690.2 420.4ZM698.7 423.4L693.4 426.5L701.2 428.9L706.2 424.9ZM705.1 425.7L699.9 428.9L709.7 430.5L712.8 427ZM714 427L709.8 430.7L720.1 432.9L723.5 428.5ZM723.3 428.9L718.4 432.6L730.3 433.1L734.2 429.5ZM732.3 429.9L731.1 433.4L740.8 433.1L742 429.5ZM740.4 429.6L741.7 433.8L751.8 433.1L751.1 429.8ZM771 428.8L772.3 432.5L784.1 431.3L781.2 427.5ZM793.2 425.6L795.4 429.8L803.6 428.6L801.3 424.1ZM803 424L803.6 427.8L814.8 426.2L811.1 422.7ZM811.2 421.6L813.4 426.2L825.8 423.3L818.7 419ZM842 410.5L850.2 413.3L856 408.1L848.2 406.3ZM854.9 403L860.4 405.5L864.7 400.9L856.6 399.1ZM858.1 399.9L864.6 401.9L870.7 396.5L862.2 396.1ZM862.4 396.1L870.6 397.2L873.1 392.9L865.2 391ZM867.3 387.1L876.1 387.2L877.1 383.2L869.5 383.5ZM868.5 379L877.5 378.7L877.2 375.3L868.2 374.9ZM863.2 358L869.7 356.3L866.8 353.5L860.6 355ZM853.4 352.6L859.7 349.9L855.7 346.8L847.8 349.2ZM834 345.9L841.1 342.4L832.4 339.6L829.2 342.5ZM827.6 342.5L833 340.8L823.3 338.3L821.4 341ZM762.4 338.3L761.2 334.9L750.4 336.5L751 338.9ZM743.7 339.9L742 337.4L730.6 338.4L733.7 342.2ZM709.9 347.5L706.3 344.7L698.3 346.7L701.6 349.2ZM693.8 352.8L688.5 349.3L680.3 353.4L686.7 354.7ZM685.4 354.9L680.4 353.5L674.5 356.1L681.4 358.3ZM681.7 358.1L674.5 356.9L669 359.1L675.9 361.3ZM668.8 364L663.5 363.1L658.1 367.7L663.5 368.7ZM671.2 418L663.4 421.2L668.8 424.4L677.6 420.1ZM690.9 426.2L682.6 429.4L693.2 432.4L697.8 428.8ZM715.2 431.5L709.8 436.7L722.2 436.5L725.5 433.1ZM774.3 432.3L776.4 436.7L785.7 436L785.4 431.9ZM829 421.1L833.6 424.7L844.7 421L838.3 417.3ZM873.3 392.2L881.9 391.9L882.9 389.4L875.1 387.9ZM875.1 387.9L885.2 389L885.9 384.2L876.3 383.9ZM875 368.4L882.9 367.9L881 363.9L869.8 364.6Z"/>
<path fill="#ffa028" d="M871.3 364.6L880.1 363L874.3 359.5L868.4 361.8ZM842.4 346.9L846.4 344.1L840.5 342.5L834.5 345.2ZM812.6 340.2L817.8 336.2L807.3 335.3L803.4 338.8ZM796.7 338.5L798.2 335L788.8 335.3L787.2 338.2ZM727.1 342.6L723.2 340L714.7 342.3L718.5 344.7ZM654.3 379.9L646 379.8L643.2 383.9L650.8 384.8ZM652.6 403.8L644.3 405.8L647.8 409.9L658.2 406.9ZM744.8 433.7L743.1 437.5L752.3 438.8L754.6 432.9ZM753.8 434.2L753.8 438.4L764.8 438.1L765.1 433.2ZM845.2 414L850 417.8L857.5 413.8L852.8 412.1ZM856.7 407.4L863.4 410.2L870.8 405.5L862.1 404.2ZM866.1 399.6L873.9 401.6L878.8 397.3L869.2 396.1ZM869.1 395.7L879.7 397.8L881.4 392.7L872.6 392.4ZM875.2 383.5L885.7 384.3L886.4 380.2L876.5 379.9ZM876.4 376.9L886.1 376.3L883.7 370.9L877.5 372.6Z"/>
<path fill="#ff7b36" d="M849.1 349.6L855.1 346.4L848.8 344.9L842.2 346.9ZM787.3 338L788.8 334.2L779.1 333.9L779.5 337.3ZM779 337.2L778.7 334.8L770.8 334.1L769.4 338.5ZM751.4 339.1L751 335.5L742 336.8L742.9 340.6ZM735.1 341.6L733.1 338L723.4 340.3L724.6 342.7ZM718.5 344.5L714.7 342.3L703.7 344.3L709.6 346.9ZM673.4 361.3L669.1 359.6L662.4 363.2L669.1 365.3ZM657.3 375.8L646.9 375.8L646.2 380L652.9 380.4ZM651.3 383.8L644.9 383.3L641.8 387.6L651.1 388.7ZM649.4 388.2L642 387.7L642.1 392.1L649.8 391.8ZM651.1 396.1L642.2 396.4L643.9 401.8L651.1 400.3ZM657.3 408.3L648.8 410.4L653 413.3L661.7 410.7ZM697.9 428.3L692.2 432.3L701.2 433.9L705.5 430.2ZM706.3 430.3L702 433.7L710.9 435.7L715.8 431.9ZM723.6 432.7L723 437.3L730.9 437.7L733.3 433.8ZM783 432.3L787.2 435.8L794.8 434.2L793.1 429.7ZM803.5 428.1L808 432.2L816.6 430.1L811.3 426ZM810.9 426.6L817.1 429.4L826 426.5L822.3 423.4ZM819.9 423.6L826 427.4L833.6 424.7L830.5 421.4ZM862.7 403.5L870.3 405.3L874.6 401.3L867.1 400.4ZM877.2 379.6L887.3 379.3L884.7 376.3L876.3 376.7ZM874.3 371.8L882.2 370.9L882.7 366.6L874.2 368.5Z"/></g>
<clipPath id="dc"><path d="M888.4 363.6L885.5 360.3L882.1 357L878.1 354L873.6 351L868.7 348.3L863.3 345.7L857.5 343.3L851.3 341.1L844.7 339.2L837.8 337.4L830.6 335.8L823.1 334.5L815.3 333.4L807.4 332.5L799.3 331.9L791 331.5L782.6 331.3L774.2 331.3L765.7 331.6L757.1 332.2L748.6 332.9L740.2 333.9L731.8 335.1L723.6 336.6L715.5 338.2L707.6 340.1L699.9 342.2L692.5 344.5L685.4 347L678.6 349.7L672.2 352.5L666.1 355.5L660.5 358.7L655.3 362L650.6 365.4L646.3 368.9L642.7 372.6L639.5 376.3L637 380.1L635.1 384L633.7 387.8L633 391.7L633 395.6L633.6 399.5L634.8 403.3L636.8 407L639.4 410.7L642.6 414.3L646.5 417.7L651 421L656.2 424.1L661.9 427L668.2 429.7L675.1 432.2L682.4 434.4L690.3 436.4L698.5 438.1L707.1 439.5L716.1 440.7L725.3 441.5L734.7 442.1L744.3 442.3L754 442.2L763.8 441.8L773.5 441.1L783.2 440.1L792.8 438.8L802.2 437.3L811.3 435.4L820.2 433.3L828.7 430.9L836.9 428.3L844.6 425.5L851.9 422.5L858.7 419.3L865 416L870.7 412.5L875.8 408.9L880.3 405.1L884.2 401.4L887.5 397.5L890.1 393.6L892.1 389.8L893.4 385.9L894.2 382L894.2 378.2L893.7 374.4L892.5 370.7L890.8 367.1Z"/></clipPath>
<g clip-path="url(#dc)"><path class="fm" style="stroke:#e8e8e8" d="M673.5 458.9L625.9 350.6M656.7 455.2L924.3 410.5M687.6 456.6L638.4 348.8M654.2 449.1L920.1 405M701.6 454.2L650.8 346.9M651.6 443.1L916 399.6M715.5 451.9L663.1 345.1M649.1 437.2L911.9 394.3M743.1 447.2L687.6 341.6M644.2 425.6L903.9 383.8M756.8 444.9L699.8 339.8M641.9 419.9L899.9 378.7M770.5 442.6L711.9 338M639.5 414.3L896.1 373.6M784 440.3L724 336.3M637.2 408.8L892.2 368.6M810.9 435.8L747.9 332.8M632.6 397.9L884.7 358.8M824.3 433.6L759.8 331M630.3 392.6L881 353.9M837.5 431.3L771.7 329.3M628.1 387.3L877.4 349.2M850.7 429.1L783.5 327.6M625.9 382.2L873.8 344.5M876.9 424.7L806.9 324.1M621.6 372L866.7 335.2M889.9 422.5L818.5 322.4M619.5 367L863.2 330.7M902.9 420.4L830.1 320.8M617.5 362.1L859.8 326.2M915.7 418.2L841.6 319.1M615.4 357.2L856.4 321.8"/><path class="fM" style="stroke:#d0d0d0;stroke-width:1" d="M729.3 449.5L675.4 343.4M646.7 431.3L907.8 389M797.5 438.1L736 334.5M634.8 403.3L888.4 363.6M863.9 426.9L795.2 325.8M623.8 377L870.2 339.8"/></g>
<clipPath id="sil"><path d="M623.9 269.3L624.9 281.4L627 293.2L630 304.7L634.1 315.8L639.1 326.5L645.1 336.6L651.9 346.1L659.5 354.9L667.9 363L676.9 370.3L686.6 376.8L696.8 382.4L707.5 387.1L718.5 390.8L729.8 393.6L741.4 395.4L753.1 396.2L764.8 396L776.6 394.9L788.2 392.7L799.6 389.6L810.8 385.6L821.7 380.7L832.1 374.9L842 368.3L851.4 360.9L860.2 352.7L868.3 343.9L875.6 334.4L882.1 324.3L887.8 313.8L892.6 302.8L896.5 291.5L899.3 279.9L901.2 268.1L902.1 256.3L901.9 244.4L900.7 232.5L898.4 220.9L895.1 209.5L890.8 198.4L885.5 187.7L879.2 177.6L872 168.1L863.9 159.2L855 151.1L845.4 143.9L835.1 137.5L824.2 132L812.8 127.6L800.9 124.2L788.8 121.9L776.4 120.7L763.9 120.6L751.3 121.7L738.9 123.8L726.6 127L714.7 131.3L703.1 136.7L692.1 143L681.6 150.2L671.8 158.4L662.7 167.3L654.4 176.9L647.1 187.2L640.7 198L635.2 209.3L630.8 221L627.5 232.9L625.2 245L624 257.2Z"/></clipPath>
<path clip-path="url(#sil)" d="M888.4 363.6L885.5 360.3L882.1 357L878.1 354L873.6 351L868.7 348.3L863.3 345.7L857.5 343.3L851.3 341.1L844.7 339.2L837.8 337.4L830.6 335.8L823.1 334.5L815.3 333.4L807.4 332.5L799.3 331.9L791 331.5L782.6 331.3L774.2 331.3L765.7 331.6L757.1 332.2L748.6 332.9L740.2 333.9L731.8 335.1L723.6 336.6L715.5 338.2L707.6 340.1L699.9 342.2L692.5 344.5L685.4 347L678.6 349.7L672.2 352.5L666.1 355.5L660.5 358.7L655.3 362L650.6 365.4L646.3 368.9L642.7 372.6L639.5 376.3L637 380.1L635.1 384L633.7 387.8L633 391.7L633 395.6L633.6 399.5L634.8 403.3L636.8 407L639.4 410.7L642.6 414.3L646.5 417.7L651 421L656.2 424.1L661.9 427L668.2 429.7L675.1 432.2L682.4 434.4L690.3 436.4L698.5 438.1L707.1 439.5L716.1 440.7L725.3 441.5L734.7 442.1L744.3 442.3L754 442.2L763.8 441.8L773.5 441.1L783.2 440.1L792.8 438.8L802.2 437.3L811.3 435.4L820.2 433.3L828.7 430.9L836.9 428.3L844.6 425.5L851.9 422.5L858.7 419.3L865 416L870.7 412.5L875.8 408.9L880.3 405.1L884.2 401.4L887.5 397.5L890.1 393.6L892.1 389.8L893.4 385.9L894.2 382L894.2 378.2L893.7 374.4L892.5 370.7L890.8 367.1Z" fill="#ff2a00" fill-opacity="0.48"/>
<g shape-rendering="crispEdges" fill-opacity="0.75"><path fill="#ff0e00" d="M745.5 395.6L752.4 395.9L759.5 395.9L766.6 395.6L773.7 395L780.7 394L787.4 392.8L783.8 393.5L778.1 394.5L772.3 395.3L766.3 395.9L760.3 396.1L754.4 396.1L748.6 395.9Z"/>
<path fill="#ff1400" d="M714 389.4L720.4 391.1L727.4 392.6L734.7 393.6L742.5 394.4L750.5 394.7L758.6 394.7L766.9 394.4L775.1 393.6L783.1 392.5L791 391.1L798.5 389.4L805.6 387.3L812.1 385L805.8 387.5L800.1 389.5L793.9 391.3L787.4 392.8L780.7 394L773.7 395L766.6 395.6L759.5 395.9L752.4 395.9L745.5 395.6L738.8 395L732.4 394.1L726.4 392.8L720.9 391.3Z"/>
<path fill="#ff1a00" d="M700.9 384.2L707.5 386.5L714.7 388.4L722.5 390L730.8 391.3L739.6 392.1L748.6 392.5L757.8 392.5L767.1 392.1L776.4 391.3L785.5 390L794.3 388.4L802.8 386.5L810.8 384.1L818.2 381.5L825 378.7L831 375.6L823.5 379.7L818.1 382.4L812.1 385L805.6 387.3L798.5 389.4L791 391.1L783.1 392.5L775.1 393.6L766.9 394.4L758.6 394.7L750.5 394.7L742.5 394.4L734.7 393.6L727.4 392.6L720.4 391.1L714 389.4L708.2 387.3Z"/>
<path fill="#ff2100" d="M682.2 374L687.6 377.2L694 380L701.2 382.6L709.2 384.8L717.9 386.5L727.1 387.9L736.8 388.8L746.8 389.3L757.1 389.3L767.4 388.8L777.7 387.9L787.8 386.5L797.5 384.7L806.9 382.6L815.7 380L823.9 377.1L831.4 374L838 370.6L843.8 366.9L836.2 372.3L831 375.6L825 378.7L818.2 381.5L810.8 384.1L802.8 386.5L794.3 388.4L785.5 390L776.4 391.3L767.1 392.1L757.8 392.5L748.6 392.5L739.6 392.1L730.8 391.3L722.5 390L714.7 388.4L707.5 386.5L700.9 384.2L695.2 381.6L690.2 378.7Z"/>
<path fill="#ff2900" d="M674.7 368.4L680.6 371.8L687.5 375L695.4 377.7L704.1 380.1L713.5 382L723.6 383.5L734.2 384.5L745.1 385L756.3 385L767.6 384.5L778.8 383.5L789.9 382L800.5 380.1L810.8 377.7L820.4 374.9L829.3 371.8L837.4 368.4L844.6 364.7L850.9 360.8L856.1 356.7L848.6 363.1L843.8 366.9L838 370.6L831.4 374L823.9 377.1L815.7 380L806.9 382.6L797.5 384.7L787.8 386.5L777.7 387.9L767.4 388.8L757.1 389.3L746.8 389.3L736.8 388.8L727.1 387.9L717.9 386.5L709.2 384.8L701.2 382.6L694 380L687.6 377.2L682.2 374Z"/>
<path fill="#ff3200" d="M662.6 358L667.8 361.9L674.1 365.6L681.5 368.9L690 371.9L699.3 374.4L709.5 376.5L720.4 378L731.8 379.1L743.6 379.6L755.7 379.6L767.8 379.1L779.9 378L791.8 376.5L803.3 374.4L814.3 371.9L824.7 368.9L834.2 365.6L842.9 361.9L850.7 358L857.4 353.8L863 349.4L867.4 344.9L860.2 352.4L856.1 356.7L850.9 360.8L844.6 364.7L837.4 368.4L829.3 371.8L820.4 374.9L810.8 377.7L800.5 380.1L789.9 382L778.8 383.5L767.6 384.5L756.3 385L745.1 385L734.2 384.5L723.6 383.5L713.5 382L704.1 380.1L695.4 377.7L687.5 375L680.6 371.8L674.7 368.4L669.9 364.7Z"/>
<path fill="#ff3b00" d="M651.8 346L656 350.5L661.5 354.6L668.2 358.5L676.1 362L685.1 365.1L695 367.8L705.9 370L717.4 371.6L729.6 372.8L742.2 373.3L755 373.3L768 372.7L780.9 371.6L793.5 370L805.8 367.8L817.5 365.1L828.5 362L838.7 358.5L848 354.6L856.2 350.4L863.3 346L869.2 341.4L873.8 336.7L867.4 344.9L863 349.4L857.4 353.8L850.7 358L842.9 361.9L834.2 365.6L824.7 368.9L814.3 371.9L803.3 374.4L791.8 376.5L779.9 378L767.8 379.1L755.7 379.6L743.6 379.6L731.8 379.1L720.4 378L709.5 376.5L699.3 374.4L690 371.9L681.5 368.9L674.1 365.6L667.8 361.9L662.6 358L658.6 353.8Z"/>
<path fill="#ff4500" d="M645.8 337.6L650.2 342.1L656 346.5L663 350.5L671.3 354.2L680.7 357.4L691.2 360.2L702.6 362.5L714.8 364.2L727.6 365.4L740.9 366L754.5 366L768.1 365.4L781.7 364.2L795.1 362.5L808 360.2L820.4 357.4L832 354.2L842.7 350.5L852.4 346.5L861 342.1L868.4 337.5L874.6 332.7L879.5 327.8L883 322.8L877.2 331.9L873.8 336.7L869.2 341.4L863.3 346L856.2 350.4L848 354.6L838.7 358.5L828.5 362L817.5 365.1L805.8 367.8L793.5 370L780.9 371.6L768 372.7L755 373.3L742.2 373.3L729.6 372.8L717.4 371.6L705.9 370L695 367.8L685.1 365.1L676.1 362L668.2 358.5L661.5 354.6L656 350.5L651.8 346Z"/>
<path fill="#ff4f00" d="M637.6 323.4L640.7 328.4L645.2 333.1L651.2 337.6L658.5 341.8L667.1 345.5L677 348.9L687.9 351.8L699.8 354.1L712.5 355.9L725.9 357.2L739.8 357.8L754 357.8L768.3 357.1L782.5 355.9L796.4 354.1L809.9 351.8L822.8 348.9L834.9 345.5L846.1 341.7L856.2 337.6L865.2 333.1L872.9 328.4L879.3 323.4L884.4 318.4L888 313.2L883 322.8L879.5 327.8L874.6 332.7L868.4 337.5L861 342.1L852.4 346.5L842.7 350.5L832 354.2L820.4 357.4L808 360.2L795.1 362.5L781.7 364.2L768.1 365.4L754.5 366L740.9 366L727.6 365.4L714.8 364.2L702.6 362.5L691.2 360.2L680.7 357.4L671.3 354.2L663 350.5L656 346.5L650.2 342.1L645.8 337.6L642.8 332.8Z"/>
<path fill="#ff5900" d="M633.2 313.6L636.4 318.6L641.1 323.4L647.2 328L654.8 332.3L663.7 336.1L673.8 339.6L685.2 342.5L697.5 344.9L710.7 346.8L724.5 348L738.9 348.6L753.6 348.6L768.4 348L783.1 346.7L797.5 344.9L811.5 342.5L824.8 339.5L837.3 336.1L848.9 332.2L859.3 328L868.6 323.4L876.6 318.6L883.2 313.5L888.4 308.4L892.1 303.1L894.4 297.9L890.3 308.1L888 313.2L884.4 318.4L879.3 323.4L872.9 328.4L865.2 333.1L856.2 337.6L846.1 341.7L834.9 345.5L822.8 348.9L809.9 351.8L796.4 354.1L782.5 355.9L768.3 357.1L754 357.8L739.8 357.8L725.9 357.2L712.5 355.9L699.8 354.1L687.9 351.8L677 348.9L667.1 345.5L658.5 341.8L651.2 337.6L645.2 333.1L640.7 328.4L637.6 323.4Z"/>
<path fill="#ff6400" d="M629.8 303.2L633.1 308.2L637.8 313.1L644.1 317.8L651.8 322.1L661 326L671.4 329.5L683 332.4L695.7 334.9L709.2 336.8L723.4 338L738.2 338.7L753.2 338.7L768.4 338L783.5 336.8L798.4 334.9L812.7 332.4L826.4 329.5L839.2 326L851.1 322.1L861.8 317.8L871.3 313.1L879.4 308.2L886.2 303.1L891.5 297.9L895.3 292.6L897.6 287.3L894.4 297.9L892.1 303.1L888.4 308.4L883.2 313.5L876.6 318.6L868.6 323.4L859.3 328L848.9 332.2L837.3 336.1L824.8 339.5L811.5 342.5L797.5 344.9L783.1 346.7L768.4 348L753.6 348.6L738.9 348.6L724.5 348L710.7 346.8L697.5 344.9L685.2 342.5L673.8 339.6L663.7 336.1L654.8 332.3L647.2 328L641.1 323.4L636.4 318.6L633.2 313.6Z"/>
<path fill="#ff6f00" d="M625.8 287.1L627.4 292.3L630.7 297.4L635.5 302.3L641.9 307L649.8 311.3L659.1 315.2L669.7 318.7L681.5 321.7L694.4 324.1L708.1 326L722.6 327.3L737.6 327.9L753 327.9L768.5 327.3L783.8 326L798.9 324.1L813.5 321.7L827.4 318.7L840.5 315.2L852.6 311.3L863.5 307L873.1 302.3L881.4 297.4L888.3 292.3L893.6 287.1L897.5 281.8L899.8 276.5L897.6 287.3L895.3 292.6L891.5 297.9L886.2 303.1L879.4 308.2L871.3 313.1L861.8 317.8L851.1 322.1L839.2 326L826.4 329.5L812.7 332.4L798.4 334.9L783.5 336.8L768.4 338L753.2 338.7L738.2 338.7L723.4 338L709.2 336.8L695.7 334.9L683 332.4L671.4 329.5L661 326L651.8 322.1L644.1 317.8L637.8 313.1L633.1 308.2L629.8 303.2L628.2 297.9Z"/>
<path fill="#ff7a00" d="M624.4 275.9L626.1 281.1L629.4 286.2L634.3 291.1L640.7 295.7L648.6 300L658 303.9L668.7 307.4L680.6 310.3L693.6 312.8L707.5 314.6L722.2 315.9L737.3 316.5L752.8 316.5L768.5 315.9L784 314.6L799.2 312.8L814 310.3L828 307.3L841.2 303.9L853.4 300L864.4 295.7L874.1 291.1L882.5 286.2L889.4 281.1L894.8 275.9L898.7 270.6L901.1 265.4L901.9 260.1L900.7 271.2L899.8 276.5L897.5 281.8L893.6 287.1L888.3 292.3L881.4 297.4L873.1 302.3L863.5 307L852.6 311.3L840.5 315.2L827.4 318.7L813.5 321.7L798.9 324.1L783.8 326L768.5 327.3L753 327.9L737.6 327.9L722.6 327.3L708.1 326L694.4 324.1L681.5 321.7L669.7 318.7L659.1 315.2L649.8 311.3L641.9 307L635.5 302.3L630.7 297.4L627.4 292.3L625.8 287.1Z"/>
<path fill="#ff8500" d="M624.1 264.5L625.8 269.7L629.1 274.7L634 279.5L640.4 284L648.4 288.2L657.8 292.1L668.5 295.5L680.4 298.4L693.5 300.8L707.4 302.7L722 303.9L737.2 304.5L752.8 304.5L768.4 303.9L784 302.7L799.3 300.8L814 298.4L828.1 295.5L841.3 292.1L853.5 288.2L864.5 284L874.3 279.5L882.7 274.7L889.6 269.7L895 264.5L898.9 259.3L901.3 254.1L902.1 249L901.9 260.1L901.1 265.4L898.7 270.6L894.8 275.9L889.4 281.1L882.5 286.2L874.1 291.1L864.4 295.7L853.4 300L841.2 303.9L828 307.3L814 310.3L799.2 312.8L784 314.6L768.5 315.9L752.8 316.5L737.3 316.5L722.2 315.9L707.5 314.6L693.6 312.8L680.6 310.3L668.7 307.4L658 303.9L648.6 300L640.7 295.7L634.3 291.1L629.4 286.2L626.1 281.1L624.4 275.9Z"/>
<path fill="#ff9000" d="M624.8 247.9L625 253L626.7 258L629.9 262.9L634.8 267.6L641.2 272L649.1 276.2L658.4 279.9L669.1 283.3L680.9 286.1L693.9 288.5L707.7 290.3L722.3 291.5L737.4 292.1L752.8 292.1L768.4 291.5L783.8 290.3L799 288.5L813.7 286.1L827.6 283.3L840.8 279.9L852.9 276.2L863.9 272L873.5 267.6L881.9 262.9L888.8 258L894.2 253L898 247.9L900.4 242.9L901.2 237.8L902.1 249L901.3 254.1L898.9 259.3L895 264.5L889.6 269.7L882.7 274.7L874.3 279.5L864.5 284L853.5 288.2L841.3 292.1L828.1 295.5L814 298.4L799.3 300.8L784 302.7L768.4 303.9L752.8 304.5L737.2 304.5L722 303.9L707.4 302.7L693.5 300.8L680.4 298.4L668.5 295.5L657.8 292.1L648.4 288.2L640.4 284L634 279.5L629.1 274.7L625.8 269.7L624.1 264.5L624 259.3Z"/>
<path fill="#ff9b00" d="M626.8 236.5L626.9 241.4L628.6 246.3L631.8 251L636.6 255.6L642.9 259.9L650.7 263.9L659.9 267.5L670.4 270.7L682.1 273.5L694.9 275.8L708.5 277.5L722.9 278.7L737.7 279.3L752.9 279.3L768.3 278.7L783.5 277.5L798.4 275.8L812.9 273.5L826.7 270.7L839.6 267.5L851.6 263.9L862.4 259.9L871.9 255.6L880.1 251L886.9 246.3L892.3 241.4L896.1 236.5L898.5 231.6L899.3 226.7L898.6 221.9L900.5 232.9L901.2 237.8L900.4 242.9L898 247.9L894.2 253L888.8 258L881.9 262.9L873.5 267.6L863.9 272L852.9 276.2L840.8 279.9L827.6 283.3L813.7 286.1L799 288.5L783.8 290.3L768.4 291.5L752.8 292.1L737.4 292.1L722.3 291.5L707.7 290.3L693.9 288.5L680.9 286.1L669.1 283.3L658.4 279.9L649.1 276.2L641.2 272L634.8 267.6L629.9 262.9L626.7 258L625 253L624.8 247.9Z"/>
<path fill="#ffa600" d="M629.8 225.2L629.9 229.9L631.6 234.6L634.8 239.1L639.5 243.5L645.7 247.6L653.3 251.5L662.3 254.9L672.6 258L684 260.7L696.5 262.9L709.8 264.5L723.8 265.7L738.3 266.2L753.2 266.2L768.1 265.7L783 264.5L797.6 262.9L811.7 260.7L825.2 258L837.8 254.9L849.5 251.5L860.1 247.6L869.4 243.5L877.5 239.1L884.1 234.6L889.4 229.9L893.1 225.2L895.4 220.5L896.3 215.8L895.7 211.2L898.6 221.9L899.3 226.7L898.5 231.6L896.1 236.5L892.3 241.4L886.9 246.3L880.1 251L871.9 255.6L862.4 259.9L851.6 263.9L839.6 267.5L826.7 270.7L812.9 273.5L798.4 275.8L783.5 277.5L768.3 278.7L752.9 279.3L737.7 279.3L722.9 278.7L708.5 277.5L694.9 275.8L682.1 273.5L670.4 270.7L659.9 267.5L650.7 263.9L642.9 259.9L636.6 255.6L631.8 251L628.6 246.3L626.9 241.4L626.8 236.5Z"/>
<path fill="#ffb000" d="M635.2 209.5L633.9 214L634.1 218.5L635.7 223L638.8 227.3L643.4 231.5L649.4 235.4L656.8 239L665.6 242.4L675.5 245.3L686.6 247.8L698.6 249.9L711.5 251.5L725.1 252.5L739.1 253.1L753.5 253.1L768 252.5L782.3 251.5L796.5 249.9L810.1 247.8L823.2 245.3L835.4 242.4L846.7 239L857 235.4L866 231.5L873.9 227.3L880.3 223L885.4 218.6L889.1 214.1L891.4 209.6L892.2 205.1L891.7 200.7L895.7 211.2L896.3 215.8L895.4 220.5L893.1 225.2L889.4 229.9L884.1 234.6L877.5 239.1L869.4 243.5L860.1 247.6L849.5 251.5L837.8 254.9L825.2 258L811.7 260.7L797.6 262.9L783 264.5L768.1 265.7L753.2 266.2L738.3 266.2L723.8 265.7L709.8 264.5L696.5 262.9L684 260.7L672.6 258L662.3 254.9L653.3 251.5L645.7 247.6L639.5 243.5L634.8 239.1L631.6 234.6L629.9 229.9L629.8 225.2L631.1 220.5Z"/>
<path fill="#ffba00" d="M640.3 198.9L639.1 203.2L639.3 207.4L640.9 211.6L643.9 215.7L648.3 219.6L654.1 223.3L661.3 226.7L669.6 229.8L679.2 232.6L689.8 235L701.4 236.9L713.7 238.4L726.7 239.4L740.2 239.9L753.9 239.9L767.8 239.4L781.5 238.4L795.1 236.9L808.1 235L820.6 232.6L832.4 229.9L843.2 226.7L853.1 223.3L861.8 219.6L869.3 215.7L875.6 211.6L880.5 207.5L884.1 203.2L886.3 199L887.1 194.7L886.6 190.6L884.8 186.6L889.7 196.4L891.7 200.7L892.2 205.1L891.4 209.6L889.1 214.1L885.4 218.6L880.3 223L873.9 227.3L866 231.5L857 235.4L846.7 239L835.4 242.4L823.2 245.3L810.1 247.8L796.5 249.9L782.3 251.5L768 252.5L753.5 253.1L739.1 253.1L725.1 252.5L711.5 251.5L698.6 249.9L686.6 247.8L675.5 245.3L665.6 242.4L656.8 239L649.4 235.4L643.4 231.5L638.8 227.3L635.7 223L634.1 218.5L633.9 214L635.2 209.5Z"/>
<path fill="#ffc400" d="M648.7 184.8L646.4 188.7L645.3 192.7L645.6 196.7L647.1 200.6L650 204.4L654.2 208L659.8 211.5L666.6 214.7L674.5 217.6L683.6 220.1L693.7 222.3L704.6 224.1L716.3 225.5L728.6 226.4L741.4 226.9L754.4 226.9L767.5 226.5L780.6 225.5L793.4 224.1L805.8 222.3L817.6 220.1L828.8 217.6L839.1 214.7L848.5 211.5L856.8 208L863.9 204.4L869.9 200.6L874.6 196.7L878 192.7L880.2 188.8L881 184.8L880.6 180.9L878.9 177.2L884.8 186.6L886.6 190.6L887.1 194.7L886.3 199L884.1 203.2L880.5 207.5L875.6 211.6L869.3 215.7L861.8 219.6L853.1 223.3L843.2 226.7L832.4 229.9L820.6 232.6L808.1 235L795.1 236.9L781.5 238.4L767.8 239.4L753.9 239.9L740.2 239.9L726.7 239.4L713.7 238.4L701.4 236.9L689.8 235L679.2 232.6L669.6 229.8L661.3 226.7L654.1 223.3L648.3 219.6L643.9 215.7L640.9 211.6L639.3 207.4L639.1 203.2L640.3 198.9L642.8 194.7Z"/>
<path fill="#ffcd00" d="M655.7 175.4L653.5 179L652.6 182.7L652.8 186.4L654.3 190L657.1 193.5L661.1 196.8L666.3 200L672.7 202.9L680.2 205.6L688.7 208L698.2 210L708.4 211.6L719.4 212.9L730.9 213.8L742.8 214.2L755 214.2L767.3 213.8L779.5 212.9L791.5 211.7L803.1 210L814.2 208L824.7 205.6L834.3 202.9L843.1 200L850.9 196.8L857.7 193.5L863.3 190L867.8 186.4L871 182.7L873.1 179.1L873.9 175.4L873.5 171.8L872 168.3L878.9 177.2L880.6 180.9L881 184.8L880.2 188.8L878 192.7L874.6 196.7L869.9 200.6L863.9 204.4L856.8 208L848.5 211.5L839.1 214.7L828.8 217.6L817.6 220.1L805.8 222.3L793.4 224.1L780.6 225.5L767.5 226.5L754.4 226.9L741.4 226.9L728.6 226.4L716.3 225.5L704.6 224.1L693.7 222.3L683.6 220.1L674.5 217.6L666.6 214.7L659.8 211.5L654.2 208L650 204.4L647.1 200.6L645.6 196.7L645.3 192.7L646.4 188.7L648.7 184.8Z"/>
<path fill="#ffd600" d="M663.6 166.6L661.6 169.9L660.7 173.3L661 176.6L662.5 179.9L665.1 183.1L668.8 186.1L673.7 189L679.6 191.7L686.6 194.1L694.4 196.2L703.2 198.1L712.7 199.6L722.8 200.7L733.4 201.5L744.4 201.9L755.7 201.9L767 201.5L778.3 200.7L789.3 199.6L800.1 198.1L810.3 196.2L820 194.1L829 191.7L837.1 189L844.4 186.1L850.6 183.1L855.9 179.9L860.1 176.6L863.1 173.3L865.1 169.9L865.9 166.6L865.6 163.3L864.2 160.1L861.7 157.1L869.3 165L872 168.3L873.5 171.8L873.9 175.4L873.1 179.1L871 182.7L867.8 186.4L863.3 190L857.7 193.5L850.9 196.8L843.1 200L834.3 202.9L824.7 205.6L814.2 208L803.1 210L791.5 211.7L779.5 212.9L767.3 213.8L755 214.2L742.8 214.2L730.9 213.8L719.4 212.9L708.4 211.6L698.2 210L688.7 208L680.2 205.6L672.7 202.9L666.3 200L661.1 196.8L657.1 193.5L654.3 190L652.8 186.4L652.6 182.7L653.5 179L655.7 175.4Z"/>
<path fill="#ffde00" d="M675 155.5L672.3 158.5L670.5 161.5L669.8 164.5L670.1 167.5L671.5 170.4L673.9 173.3L677.3 176L681.8 178.6L687.2 181L693.6 183.1L700.8 185.1L708.7 186.7L717.3 188L726.5 189.1L736.2 189.7L746.2 190.1L756.4 190.1L766.7 189.7L776.9 189.1L787 188L796.7 186.7L806.1 185.1L814.9 183.2L823 181L830.5 178.6L837.1 176L842.9 173.3L847.7 170.5L851.5 167.5L854.4 164.5L856.2 161.5L857 158.5L856.7 155.6L855.5 152.7L853.3 149.9L861.7 157.1L864.2 160.1L865.6 163.3L865.9 166.6L865.1 169.9L863.1 173.3L860.1 176.6L855.9 179.9L850.6 183.1L844.4 186.1L837.1 189L829 191.7L820 194.1L810.3 196.2L800.1 198.1L789.3 199.6L778.3 200.7L767 201.5L755.7 201.9L744.4 201.9L733.4 201.5L722.8 200.7L712.7 199.6L703.2 198.1L694.4 196.2L686.6 194.1L679.6 191.7L673.7 189L668.8 186.1L665.1 183.1L662.5 179.9L661 176.6L660.7 173.3L661.6 169.9L663.6 166.6L666.6 163.3Z"/>
<path fill="#ffe500" d="M687.5 146L684.2 148.5L681.8 151.1L680.3 153.8L679.7 156.5L680 159.1L681.3 161.7L683.5 164.2L686.6 166.6L690.6 168.9L695.5 171L701.2 172.9L707.6 174.5L714.7 176L722.4 177.1L730.6 178L739.2 178.6L748.1 178.9L757.2 178.9L766.4 178.6L775.5 178L784.5 177.2L793.2 176L801.5 174.5L809.3 172.9L816.7 171L823.3 168.9L829.3 166.6L834.4 164.2L838.8 161.7L842.2 159.1L844.8 156.5L846.5 153.8L847.2 151.2L847.1 148.6L846 146L844.1 143.6L841.3 141.2L850.2 147.3L853.3 149.9L855.5 152.7L856.7 155.6L857 158.5L856.2 161.5L854.4 164.5L851.5 167.5L847.7 170.5L842.9 173.3L837.1 176L830.5 178.6L823 181L814.9 183.2L806.1 185.1L796.7 186.7L787 188L776.9 189.1L766.7 189.7L756.4 190.1L746.2 190.1L736.2 189.7L726.5 189.1L717.3 188L708.7 186.7L700.8 185.1L693.6 183.1L687.2 181L681.8 178.6L677.3 176L673.9 173.3L671.5 170.4L670.1 167.5L669.8 164.5L670.5 161.5L672.3 158.5L675 155.5L678.7 152.7Z"/>
<path fill="#ffeb00" d="M697 140.2L694.2 142.4L692.1 144.7L690.8 147L690.3 149.2L690.7 151.5L691.8 153.8L693.7 155.9L696.5 158L700 159.9L704.3 161.7L709.3 163.3L714.9 164.8L721.1 166L727.8 167L734.9 167.8L742.4 168.3L750.2 168.6L758.1 168.6L766 168.3L774 167.8L781.8 167L789.3 166L796.6 164.8L803.5 163.4L809.8 161.7L815.7 159.9L820.9 158L825.4 155.9L829.2 153.8L832.3 151.5L834.6 149.3L836.1 147L836.8 144.7L836.7 142.4L835.8 140.2L834.1 138.1L831.7 136.1L828.6 134.1L837.7 139L841.3 141.2L844.1 143.6L846 146L847.1 148.6L847.2 151.2L846.5 153.8L844.8 156.5L842.2 159.1L838.8 161.7L834.4 164.2L829.3 166.6L823.3 168.9L816.7 171L809.3 172.9L801.5 174.5L793.2 176L784.5 177.2L775.5 178L766.4 178.6L757.2 178.9L748.1 178.9L739.2 178.6L730.6 178L722.4 177.1L714.7 176L707.6 174.5L701.2 172.9L695.5 171L690.6 168.9L686.6 166.6L683.5 164.2L681.3 161.7L680 159.1L679.7 156.5L680.3 153.8L681.8 151.1L684.2 148.5L687.5 146Z"/>
<path fill="#fff100" d="M713.5 131.8L710 133.5L707.1 135.3L704.7 137.2L703 139.1L702 141L701.6 142.9L701.9 144.8L702.9 146.7L704.6 148.5L707 150.2L710 151.8L713.6 153.3L717.8 154.7L722.6 155.9L727.8 156.9L733.5 157.7L739.5 158.4L745.8 158.8L752.3 159L759 159L765.7 158.8L772.4 158.4L778.9 157.7L785.3 156.9L791.5 155.9L797.3 154.7L802.6 153.4L807.6 151.9L812 150.2L815.9 148.5L819.1 146.7L821.8 144.9L823.7 142.9L825 141L825.7 139.1L825.6 137.2L824.9 135.3L823.5 133.6L821.5 131.8L818.9 130.2L815.7 128.7L824.8 132.4L828.6 134.1L831.7 136.1L834.1 138.1L835.8 140.2L836.7 142.4L836.8 144.7L836.1 147L834.6 149.3L832.3 151.5L829.2 153.8L825.4 155.9L820.9 158L815.7 159.9L809.8 161.7L803.5 163.4L796.6 164.8L789.3 166L781.8 167L774 167.8L766 168.3L758.1 168.6L750.2 168.6L742.4 168.3L734.9 167.8L727.8 167L721.1 166L714.9 164.8L709.3 163.3L704.3 161.7L700 159.9L696.5 158L693.7 155.9L691.8 153.8L690.7 151.5L690.3 149.2L690.8 147L692.1 144.7L694.2 142.4L697 140.2L700.5 138.1L704.6 136Z"/>
<path fill="#fff500" d="M726.2 127.3L722.9 128.6L720.1 130L717.7 131.4L715.9 132.9L714.5 134.5L713.7 136L713.4 137.6L713.7 139.1L714.5 140.6L715.9 142L717.9 143.4L720.3 144.7L723.3 145.9L726.7 147L730.5 147.9L734.8 148.7L739.4 149.4L744.2 149.9L749.3 150.2L754.6 150.4L759.9 150.4L765.3 150.2L770.7 149.9L776 149.4L781.2 148.7L786.1 147.9L790.8 147L795.2 145.9L799.2 144.7L802.8 143.4L805.9 142L808.6 140.6L810.7 139.1L812.4 137.6L813.5 136L814 134.5L814 133L813.5 131.5L812.4 130L810.8 128.6L808.7 127.3L806.1 126.1L803.1 125L799.6 124L807.8 126.1L812 127.4L815.7 128.7L818.9 130.2L821.5 131.8L823.5 133.6L824.9 135.3L825.6 137.2L825.7 139.1L825 141L823.7 142.9L821.8 144.9L819.1 146.7L815.9 148.5L812 150.2L807.6 151.9L802.6 153.4L797.3 154.7L791.5 155.9L785.3 156.9L778.9 157.7L772.4 158.4L765.7 158.8L759 159L752.3 159L745.8 158.8L739.5 158.4L733.5 157.7L727.8 156.9L722.6 155.9L717.8 154.7L713.6 153.3L710 151.8L707 150.2L704.6 148.5L702.9 146.7L701.9 144.8L701.6 142.9L702 141L703 139.1L704.7 137.2L707.1 135.3L710 133.5L713.5 131.8L717.5 130.2Z"/>
<path fill="#fff900" d="M747.7 122.3L744.2 122.9L741 123.7L737.9 124.5L735.2 125.5L732.7 126.5L730.6 127.5L728.8 128.6L727.4 129.7L726.4 130.9L725.8 132L725.7 133.2L725.9 134.3L726.6 135.5L727.6 136.6L729.1 137.6L731 138.5L733.2 139.4L735.8 140.2L738.7 140.9L741.9 141.5L745.4 142L749.1 142.4L752.9 142.7L756.9 142.8L760.9 142.8L765 142.7L769 142.4L773 142L776.9 141.6L780.6 141L784.2 140.2L787.5 139.4L790.5 138.6L793.3 137.6L795.7 136.6L797.7 135.5L799.3 134.4L800.6 133.2L801.5 132.1L801.9 130.9L801.9 129.7L801.5 128.6L800.7 127.5L799.5 126.5L797.9 125.5L796 124.6L793.7 123.7L791.1 123L788.2 122.3L785.1 121.7L781.7 121.3L778.2 120.9L782.6 121.3L787.3 121.8L791.7 122.4L795.8 123.1L799.6 124L803.1 125L806.1 126.1L808.7 127.3L810.8 128.6L812.4 130L813.5 131.5L814 133L814 134.5L813.5 136L812.4 137.6L810.7 139.1L808.6 140.6L805.9 142L802.8 143.4L799.2 144.7L795.2 145.9L790.8 147L786.1 147.9L781.2 148.7L776 149.4L770.7 149.9L765.3 150.2L759.9 150.4L754.6 150.4L749.3 150.2L744.2 149.9L739.4 149.4L734.8 148.7L730.5 147.9L726.7 147L723.3 145.9L720.3 144.7L717.9 143.4L715.9 142L714.5 140.6L713.7 139.1L713.4 137.6L713.7 136L714.5 134.5L715.9 132.9L717.7 131.4L720.1 130L722.9 128.6L726.2 127.3L729.8 126.1L733.8 125L738.1 124L742.7 123.1Z"/>
<path fill="#fffc00" d="M738.9 131.4L739.6 132.1L740.6 132.8L741.9 133.4L743.4 134L745.1 134.6L747.1 135L749.2 135.4L751.5 135.8L754 136L756.5 136.2L759.2 136.3L761.9 136.3L764.6 136.2L767.3 136L770 135.8L772.6 135.4L775.1 135L777.4 134.6L779.7 134L781.7 133.4L783.5 132.8L785.2 132.1L786.5 131.4L787.7 130.7L788.5 129.9L789.1 129.1L789.4 128.3L789.5 127.6L789.2 126.8L788.7 126.1L787.9 125.4L786.8 124.7L785.5 124.1L784 123.5L782.3 123L780.3 122.6L778.2 122.2L775.9 121.9L773.6 121.6L771.1 121.5L768.5 121.4L765.9 121.4L763.2 121.5L760.6 121.6L758 121.9L755.4 122.2L753 122.6L750.6 123L748.4 123.5L746.4 124.1L744.5 124.7L742.9 125.4L741.5 126.1L740.3 126.8L739.4 127.6L738.7 128.3L738.3 129.1L738.2 129.9L738.4 130.7ZM726.6 135.5L727.6 136.6L729.1 137.6L731 138.5L733.2 139.4L735.8 140.2L738.7 140.9L741.9 141.5L745.4 142L749.1 142.4L752.9 142.7L756.9 142.8L760.9 142.8L765 142.7L769 142.4L773 142L776.9 141.6L780.6 141L784.2 140.2L787.5 139.4L790.5 138.6L793.3 137.6L795.7 136.6L797.7 135.5L799.3 134.4L800.6 133.2L801.5 132.1L801.9 130.9L801.9 129.7L801.5 128.6L800.7 127.5L799.5 126.5L797.9 125.5L796 124.6L793.7 123.7L791.1 123L788.2 122.3L785.1 121.7L781.7 121.3L778.2 120.9L774.5 120.7L770.7 120.6L766.8 120.6L762.9 120.7L759 120.9L755.1 121.3L751.4 121.7L747.7 122.3L744.2 122.9L741 123.7L737.9 124.5L735.2 125.5L732.7 126.5L730.6 127.5L728.8 128.6L727.4 129.7L726.4 130.9L725.8 132L725.7 133.2L725.9 134.3Z"/>
<path fill="#fffe00" d="M751.3 128.4L751.7 128.8L752.2 129.1L752.9 129.4L753.6 129.7L754.5 130L755.5 130.2L756.6 130.4L757.7 130.6L758.9 130.7L760.2 130.8L761.5 130.8L762.9 130.8L764.2 130.8L765.6 130.7L766.9 130.6L768.2 130.4L769.5 130.2L770.7 130L771.8 129.7L772.8 129.4L773.7 129.1L774.5 128.8L775.2 128.4L775.8 128L776.2 127.7L776.6 127.3L776.7 126.9L776.7 126.5L776.6 126.1L776.4 125.7L776 125.4L775.5 125.1L774.8 124.7L774 124.5L773.2 124.2L772.2 124L771.1 123.8L770 123.6L768.8 123.5L767.5 123.4L766.2 123.4L764.9 123.4L763.5 123.4L762.2 123.5L760.9 123.6L759.6 123.8L758.4 124L757.2 124.2L756.1 124.5L755.1 124.7L754.1 125.1L753.3 125.4L752.6 125.7L752 126.1L751.6 126.5L751.2 126.9L751.1 127.3L751 127.7L751.1 128ZM738.9 131.4L739.6 132.1L740.6 132.8L741.9 133.4L743.4 134L745.1 134.6L747.1 135L749.2 135.4L751.5 135.8L754 136L756.5 136.2L759.2 136.3L761.9 136.3L764.6 136.2L767.3 136L770 135.8L772.6 135.4L775.1 135L777.4 134.6L779.7 134L781.7 133.4L783.5 132.8L785.2 132.1L786.5 131.4L787.7 130.7L788.5 129.9L789.1 129.1L789.4 128.3L789.5 127.6L789.2 126.8L788.7 126.1L787.9 125.4L786.8 124.7L785.5 124.1L784 123.5L782.3 123L780.3 122.6L778.2 122.2L775.9 121.9L773.6 121.6L771.1 121.5L768.5 121.4L765.9 121.4L763.2 121.5L760.6 121.6L758 121.9L755.4 122.2L753 122.6L750.6 123L748.4 123.5L746.4 124.1L744.5 124.7L742.9 125.4L741.5 126.1L740.3 126.8L739.4 127.6L738.7 128.3L738.3 129.1L738.2 129.9L738.4 130.7Z"/>
<path fill="#ffff00" d="M763.9 126.5L763.9 126.5L763.9 126.5L763.9 126.5L763.9 126.5L763.9 126.5L763.9 126.5L763.9 126.5L763.9 126.5L763.9 126.5L763.9 126.5L763.9 126.5L763.9 126.5L763.9 126.5L763.9 126.5L763.9 126.5L763.9 126.5L763.9 126.5L763.9 126.5L763.9 126.5L763.9 126.5L763.9 126.5L763.9 126.5L763.9 126.5L763.9 126.5L763.9 126.5L763.9 126.5L763.9 126.5L763.9 126.5L763.9 126.5L763.9 126.5L763.9 126.5L763.9 126.5L763.9 126.5L763.9 126.5L763.9 126.5L763.9 126.5L763.9 126.5L763.9 126.5L763.9 126.5L763.9 126.5L763.9 126.5L763.9 126.5L763.9 126.5L763.9 126.5L763.9 126.5L763.9 126.5L763.9 126.5L763.9 126.5L763.9 126.5L763.9 126.5L763.9 126.5L763.9 126.5L763.9 126.5L763.9 126.5L763.9 126.5L763.9 126.5L763.9 126.5L763.9 126.5L763.9 126.5ZM751.3 128.4L751.7 128.8L752.2 129.1L752.9 129.4L753.6 129.7L754.5 130L755.5 130.2L756.6 130.4L757.7 130.6L758.9 130.7L760.2 130.8L761.5 130.8L762.9 130.8L764.2 130.8L765.6 130.7L766.9 130.6L768.2 130.4L769.5 130.2L770.7 130L771.8 129.7L772.8 129.4L773.7 129.1L774.5 128.8L775.2 128.4L775.8 128L776.2 127.7L776.6 127.3L776.7 126.9L776.7 126.5L776.6 126.1L776.4 125.7L776 125.4L775.5 125.1L774.8 124.7L774 124.5L773.2 124.2L772.2 124L771.1 123.8L770 123.6L768.8 123.5L767.5 123.4L766.2 123.4L764.9 123.4L763.5 123.4L762.2 123.5L760.9 123.6L759.6 123.8L758.4 124L757.2 124.2L756.1 124.5L755.1 124.7L754.1 125.1L753.3 125.4L752.6 125.7L752 126.1L751.6 126.5L751.2 126.9L751.1 127.3L751 127.7L751.1 128Z"/></g>
<path d="M822.6 133.2L820.7 131.5L818.1 130L815 128.5L811.3 127.1L807.1 125.9L802.5 124.9L797.5 124L792.2 123.2L786.6 122.7L780.7 122.3L774.7 122.1L768.5 122.1L762.3 122.3L756.1 122.7L750 123.2L744 124L738.3 124.9L732.7 125.9L727.5 127.1L722.7 128.5L718.2 129.9L714.3 131.5L710.8 133.2L707.9 135L705.6 136.8L703.9 138.7L702.9 140.6L702.5 142.5L702.9 144.3L703.8 146.2L705.5 147.9L707.8 149.6L710.8 151.2L714.4 152.7L718.5 154L723.2 155.2L728.4 156.2L733.9 157L739.9 157.6L746.1 158.1L752.5 158.3L759 158.3L765.7 158.1L772.2 157.6L778.7 157L785 156.2L791 155.2L796.7 154L802 152.7L806.9 151.2L811.3 149.6L815.1 148L818.3 146.2L820.9 144.3L822.8 142.5L824.1 140.6L824.7 138.7L824.7 136.8L824 135Z" fill="#fff000" fill-opacity="0.75"/>
<path d="M638.2 324.6L633 313L629.2 300.7L626.8 287.8L625.9 274.5L626.4 260.9L628.5 247.1L632 233.3L637.1 219.7L643.7 206.5L651.6 193.8L660.9 181.8L671.4 170.6L683 160.4L695.5 151.3L708.9 143.4M657 352.1L649.7 342.6L643.5 332.1L638.6 320.7L634.9 308.5L632.5 295.6L631.6 282.1L632.1 268.3L634.1 254.3L637.6 240.2L642.5 226.2L648.9 212.5L656.5 199.3L665.5 186.7L675.6 174.9L686.7 164.1L698.7 154.4L711.5 145.9M681.2 373.3L672.6 366.5L664.9 358.5L658.1 349.3L652.3 339L647.6 327.8L644.1 315.7L641.9 302.8L641.1 289.3L641.6 275.3L643.4 261L646.7 246.6L651.3 232.2L657.2 218.1L664.4 204.4L672.7 191.3L682.2 178.9L692.5 167.5L703.7 157.2L715.5 148.2M698.6 383.2L690.3 378.1L682.5 371.7L675.6 364.1L669.4 355.2L664.2 345.2L660 334.1L656.9 322.1L654.9 309.2L654.1 295.6L654.5 281.5L656.2 267L659.1 252.3L663.3 237.6L668.6 223L675.1 208.9L682.6 195.3L691 182.5L700.3 170.6L710.3 159.7L720.9 150.1M716.1 390.1L708.5 386.8L701.4 382.1L694.8 376.1L688.8 368.8L683.6 360.2L679.1 350.4L675.5 339.5L672.8 327.5L671.1 314.6L670.4 301L670.8 286.7L672.2 272L674.7 257.1L678.2 242.1L682.8 227.2L688.3 212.7L694.7 198.7L702 185.5L709.9 173.1L718.4 161.9L727.4 151.8M732.5 394L726.1 392.5L720.1 389.6L714.4 385.3L709.1 379.6L704.3 372.5L700.1 364.1L696.5 354.5L693.6 343.7L691.4 331.7L690.1 318.9L689.5 305.2L689.8 290.8L690.9 276L692.9 260.8L695.7 245.6L699.4 230.5L703.8 215.6L708.9 201.4L714.7 187.8L721 175.1L727.8 163.5L734.9 153.1M741.7 395.4L737.2 394.1L732.9 391.5L728.8 387.4L725 381.9L721.6 375L718.5 366.8L715.9 357.3L713.8 346.5L712.3 334.6L711.3 321.8L710.9 308L711.1 293.6L711.9 278.7L713.3 263.4L715.3 248L717.9 232.7L721 217.7L724.7 203.2L728.8 189.4L733.3 176.5L738.1 164.6L743.3 154M751.6 396.1L749 395L746.6 392.4L744.2 388.5L742.1 383.1L740.1 376.3L738.3 368.1L736.8 358.7L735.6 347.9L734.7 336.1L734.1 323.2L733.9 309.5L733.9 295L734.4 280L735.2 264.7L736.3 249.2L737.8 233.8L739.5 218.7L741.6 204.1L743.9 190.2L746.5 177.1L749.3 165.2L752.2 154.4M761.9 396.1L761.3 394.9L760.8 392.4L760.2 388.4L759.8 383.1L759.3 376.3L758.9 368.1L758.5 358.6L758.2 347.9L758 336L757.8 323.2L757.7 309.4L757.7 295L757.8 280L757.9 264.6L758.1 249.2L758.4 233.8L758.8 218.7L759.2 204L759.7 190.1L760.2 177.1L760.8 165.2L761.4 154.4M772.2 395.3L773.7 394.1L775.1 391.4L776.4 387.3L777.6 381.8L778.6 374.9L779.6 366.7L780.4 357.1L781 346.4L781.4 334.5L781.7 321.6L781.8 307.9L781.6 293.5L781.3 278.5L780.8 263.3L780.1 247.9L779.2 232.6L778.1 217.6L776.8 203.1L775.5 189.3L773.9 176.4L772.3 164.6L770.6 153.9M782.3 393.9L785.8 392.4L789 389.4L792.1 385.1L794.9 379.4L797.5 372.3L799.7 363.9L801.6 354.3L803.1 343.4L804.2 331.5L804.9 318.6L805.1 304.9L804.9 290.6L804.2 275.7L803.1 260.6L801.4 245.4L799.4 230.3L796.9 215.5L794.1 201.2L790.9 187.7L787.4 175L783.7 163.4L779.7 153M791.9 391.8L797.2 389.9L802.3 386.6L807 381.9L811.3 375.9L815.3 368.6L818.7 359.9L821.7 350.1L824 339.2L825.7 327.2L826.8 314.3L827.2 300.7L826.8 286.4L825.8 271.7L824.1 256.8L821.6 241.8L818.5 227L814.7 212.5L810.4 198.5L805.5 185.3L800.1 173L794.4 161.8L788.3 151.7M800.8 389.2L807.7 386.7L814.4 382.9L820.6 377.8L826.3 371.4L831.5 363.8L836.1 354.9L839.9 344.8L843 333.7L845.3 321.7L846.7 308.8L847.2 295.2L846.8 281.1L845.4 266.6L843.1 251.9L840 237.3L835.9 222.7L830.9 208.6L825.2 195.1L818.8 182.3L811.8 170.4L804.3 159.6L796.3 150M817 382.9L825.1 378.6L832.6 373L839.5 366.1L845.7 358.1L851.2 348.9L855.9 338.6L859.6 327.4L862.3 315.2L864 302.3L864.6 288.8L864.1 274.9L862.5 260.6L859.8 246.2L856 231.9L851.1 217.8L845.2 204.1L838.3 191L830.6 178.7L822.1 167.3L813 157.1L803.3 148M834 373.7L842.6 367.6L850.5 360.2L857.6 351.7L863.8 342.2L869.1 331.6L873.3 320.2L876.4 308L878.3 295.1L879 281.7L878.5 267.9L876.7 253.9L873.6 239.8L869.3 225.8L863.7 212.2L857 199L849.2 186.4L840.4 174.7L830.8 163.9L820.3 154.2L809.2 145.8M850.4 361.7L859 353.8L866.8 344.9L873.6 334.9L879.3 324.1L883.9 312.5L887.2 300.2L889.3 287.3L890.1 274L889.5 260.4L887.6 246.6L884.2 232.9L879.5 219.3L873.5 206.1L866.2 193.5L857.7 181.5L848.1 170.3L837.5 160.1L826.1 151.1L814 143.3M880.3 327.4L886.3 316.3L891.1 304.5L894.6 292.1L896.8 279.2L897.6 266L897 252.6L895 239.1L891.5 225.7L886.5 212.6L880.2 199.9L872.5 187.7L863.6 176.3L853.5 165.8L842.3 156.2L830.2 147.8L817.3 140.7M898.5 283.9L900.7 271.1L901.5 258L900.9 244.7L898.8 231.5L895.3 218.5L890.2 205.8L883.8 193.5L876 181.9L866.8 171.1L856.5 161.1L845 152.2L832.5 144.5L819.3 138.1M899.1 224.1L895.6 211.4L890.6 199L884.2 187.3L876.4 176.2L867.3 165.9L857 156.5L845.6 148.3L833.1 141.2L819.8 135.4M881.6 181.3L874 170.6L865.2 160.9L855.2 152.1L844 144.4L831.9 138L818.8 132.8M851.1 147.9L840.5 140.8L828.9 134.9L816.5 130.4M824.4 132.2L812.9 128.2M706.4 135L717.3 130.5M689.6 144.6L700.8 138.1L712.9 132.9M663.8 166.1L673.8 156.7L684.9 148.4L696.9 141.3L709.8 135.5M636.7 206L643.2 193.8L651 182.1L660.2 171.2L670.6 161.3L682.1 152.4L694.6 144.6L708 138.1M623.9 266.4L624.4 252.9L626.5 239.4L630.1 226L635.2 212.9L641.8 200.1L649.8 187.9L659.1 176.5L669.7 165.9L681.4 156.4L694.2 148L707.7 140.8M638.1 324.5L633 312.8L629.1 300.5L626.7 287.7L625.8 274.3L626.3 260.7L628.4 246.9L632 233.2L637.1 219.6L643.6 206.4L651.6 193.7L660.9 181.7L671.4 170.5L683 160.3L695.5 151.2L708.8 143.4M741.7 395.4L751.6 396.1L761.9 396.1L772.2 395.3L782.3 393.9L791.9 391.8M716.1 390.1L726.1 392.5L737.2 394.1L749 395L761.3 394.9L773.7 394.1L785.8 392.4L797.2 389.9L807.7 386.7L817 382.9M698.6 383.2L708.5 386.8L720.1 389.6L732.9 391.5L746.6 392.4L760.8 392.4L775.1 391.4L789 389.4L802.3 386.6L814.4 382.9L825.1 378.6L834 373.7M681.2 373.3L690.3 378.1L701.4 382.1L714.4 385.3L728.8 387.4L744.2 388.5L760.2 388.4L776.4 387.3L792.1 385.1L807 381.9L820.6 377.8L832.6 373L842.6 367.6L850.4 361.7M665.3 360.6L672.6 366.5L682.5 371.7L694.8 376.1L709.1 379.6L725 381.9L742.1 383.1L759.8 383.1L777.6 381.8L794.9 379.4L811.3 375.9L826.3 371.4L839.5 366.1L850.5 360.2L859 353.8M657 352.1L664.9 358.5L675.6 364.1L688.8 368.8L704.3 372.5L721.6 375L740.1 376.3L759.3 376.3L778.6 374.9L797.5 372.3L815.3 368.6L831.5 363.8L845.7 358.1L857.6 351.7L866.8 344.9L873.1 337.7M644.6 335.4L649.7 342.6L658.1 349.3L669.4 355.2L683.6 360.2L700.1 364.1L718.5 366.8L738.3 368.1L758.9 368.1L779.6 366.7L799.7 363.9L818.7 359.9L836.1 354.9L851.2 348.9L863.8 342.2L873.6 334.9L880.3 327.4M638.2 324.6L643.5 332.1L652.3 339L664.2 345.2L679.1 350.4L696.5 354.5L715.9 357.3L736.8 358.7L758.5 358.6L780.4 357.1L801.6 354.3L821.7 350.1L839.9 344.8L855.9 338.6L869.1 331.6L879.3 324.1L886.3 316.3M633 313L638.6 320.7L647.6 327.8L660 334.1L675.5 339.5L693.6 343.7L713.8 346.5L735.6 347.9L758.2 347.9L781 346.4L803.1 343.4L824 339.2L843 333.7L859.6 327.4L873.3 320.2L883.9 312.5L891.1 304.5L894.9 296.4M629.2 300.7L634.9 308.5L644.1 315.7L656.9 322.1L672.8 327.5L691.4 331.7L712.3 334.6L734.7 336.1L758 336L781.4 334.5L804.2 331.5L825.7 327.2L845.3 321.7L862.3 315.2L876.4 308L887.2 300.2L894.6 292.1L898.5 283.9M626.8 287.8L632.5 295.6L641.9 302.8L654.9 309.2L671.1 314.6L690.1 318.9L711.3 321.8L734.1 323.2L757.8 323.2L781.7 321.6L804.9 318.6L826.8 314.3L846.7 308.8L864 302.3L878.3 295.1L889.3 287.3L896.8 279.2L900.7 271.1M624.8 279.6L626.7 287.7M625.9 274.5L631.6 282.1L641.1 289.3L654.1 295.6L670.4 301L689.5 305.2L710.9 308L733.9 309.5L757.7 309.4L781.8 307.9L805.1 304.9L827.2 300.7L847.2 295.2L864.6 288.8L879 281.7L890.1 274L897.6 266L901.5 258L901.8 250.1M623.9 266.4L625.8 274.3M626.4 260.9L632.1 268.3L641.6 275.3L654.5 281.5L670.8 286.7L689.8 290.8L711.1 293.6L733.9 295L757.7 295L781.6 293.5L804.9 290.6L826.8 286.4L846.8 281.1L864.1 274.9L878.5 267.9L889.5 260.4L897 252.6L900.9 244.7L901.2 237M624.4 252.9L626.3 260.7M628.5 247.1L634.1 254.3L643.4 261L656.2 267L672.2 272L690.9 276L711.9 278.7L734.4 280L757.8 280L781.3 278.5L804.2 275.7L825.8 271.7L845.4 266.6L862.5 260.6L876.7 253.9L887.6 246.6L895 239.1L898.8 231.5L899.1 224.1M626.5 239.4L628.4 246.9M632 233.3L637.6 240.2L646.7 246.6L659.1 252.3L674.7 257.1L692.9 260.8L713.3 263.4L735.2 264.7L757.9 264.6L780.8 263.3L803.1 260.6L824.1 256.8L843.1 251.9L859.8 246.2L873.6 239.8L884.2 232.9L891.5 225.7L895.3 218.5L895.6 211.4M631.7 218.8L630.1 226L632 233.2M637.1 219.7L642.5 226.2L651.3 232.2L663.3 237.6L678.2 242.1L695.7 245.6L715.3 248L736.3 249.2L758.1 249.2L780.1 247.9L801.4 245.4L821.6 241.8L840 237.3L856 231.9L869.3 225.8L879.5 219.3L886.5 212.6L890.2 205.8L890.6 199L887.8 192.6M636.7 206L635.2 212.9L637.1 219.6M643.7 206.5L648.9 212.5L657.2 218.1L668.6 223L682.8 227.2L699.4 230.5L717.9 232.7L737.8 233.8L758.4 233.8L779.2 232.6L799.4 230.3L818.5 227L835.9 222.7L851.1 217.8L863.7 212.2L873.5 206.1L880.2 199.9L883.8 193.5L884.2 187.3L881.6 181.3M643.2 193.8L641.8 200.1L643.6 206.4M651.6 193.8L656.5 199.3L664.4 204.4L675.1 208.9L688.3 212.7L703.8 215.6L721 217.7L739.5 218.7L758.8 218.7L778.1 217.6L796.9 215.5L814.7 212.5L830.9 208.6L845.2 204.1L857 199L866.2 193.5L872.5 187.7L876 181.9L876.4 176.2L874 170.6M655.1 176.4L651 182.1L649.8 187.9L651.6 193.7M660.9 181.8L665.5 186.7L672.7 191.3L682.6 195.3L694.7 198.7L708.9 201.4L724.7 203.2L741.6 204.1L759.2 204L776.8 203.1L794.1 201.2L810.4 198.5L825.2 195.1L838.3 191L849.2 186.4L857.7 181.5L863.6 176.3L866.8 171.1L867.3 165.9L865.2 160.9L860.6 156.2M663.8 166.1L660.2 171.2L659.1 176.5L660.9 181.7M671.4 170.6L675.6 174.9L682.2 178.9L691 182.5L702 185.5L714.7 187.8L728.8 189.4L743.9 190.2L759.7 190.1L775.5 189.3L790.9 187.7L805.5 185.3L818.8 182.3L830.6 178.7L840.4 174.7L848.1 170.3L853.5 165.8L856.5 161.1L857 156.5L855.2 152.1L851.1 147.9M673.8 156.7L670.6 161.3L669.7 165.9L671.4 170.5M683 160.4L686.7 164.1L692.5 167.5L700.3 170.6L709.9 173.1L721 175.1L733.3 176.5L746.5 177.1L760.2 177.1L773.9 176.4L787.4 175L800.1 173L811.8 170.4L822.1 167.3L830.8 163.9L837.5 160.1L842.3 156.2L845 152.2L845.6 148.3L844 144.4L840.5 140.8L835 137.5M689.6 144.6L684.9 148.4L682.1 152.4L681.4 156.4L683 160.3M695.5 151.3L698.7 154.4L703.7 157.2L710.3 159.7L718.4 161.9L727.8 163.5L738.1 164.6L749.3 165.2L760.8 165.2L772.3 164.6L783.7 163.4L794.4 161.8L804.3 159.6L813 157.1L820.3 154.2L826.1 151.1L830.2 147.8L832.5 144.5L833.1 141.2L831.9 138L828.9 134.9L824.4 132.2M706.4 135L700.8 138.1L696.9 141.3L694.6 144.6L694.2 148L695.5 151.2" fill="none" stroke="#007800" stroke-opacity="0.9" stroke-width="1.06"/>
<path d="M708.9 143.4L722.8 137L737.2 131.9L751.9 128.3L766.6 126.3L781.2 125.7L795.5 126.7L809.4 129.3L822.6 133.2M711.5 145.9L724.8 138.8L738.6 133.1L752.5 128.8L766.5 126.1L780.3 125L793.8 125.4L806.9 127.3L819.3 130.7M715.5 148.2L727.9 140.4L740.6 134.1L753.4 129.3L766.3 126L779 124.3L791.4 124.2L803.3 125.5L814.7 128.4M720.9 150.1L731.9 141.9L743.2 135.1L754.6 129.7L766 125.9L777.2 123.7L788.2 123.1L798.7 124L808.7 126.4M727.4 151.8L736.8 143.1L746.3 135.8L756 130.1L765.7 125.9L775.2 123.2L784.4 122.2L793.3 122.7M734.9 153.1L742.4 144L750 136.4L757.6 130.3L765.3 125.8L772.8 122.9L780.1 121.5L787.2 121.7M743.3 154L748.6 144.7L754 136.8L759.4 130.5L764.9 125.8L770.2 122.6L775.4 121L780.4 121M752.2 154.4L755.2 145L758.2 137.1L761.4 130.6L764.5 125.7L767.5 122.5L770.5 120.8L773.3 120.7M761.4 154.4L762 145L762.7 137L763.3 130.6L764 125.7L764.7 122.5L765.3 120.8L766 120.7M770.6 153.9L768.9 144.7L767.1 136.8L765.3 130.5L763.6 125.8L761.8 122.6L760.1 121.1L758.5 121.1M779.7 153L775.6 144L771.5 136.4L767.3 130.3L763.1 125.8L759 122.9L755.1 121.5L751.3 121.8M788.3 151.7L782.1 143L775.6 135.8L769.2 130.1L762.7 125.9L756.4 123.3L750.2 122.2L744.3 122.8M796.3 150L788 141.8L779.5 135L770.9 129.7L762.3 125.9L753.9 123.8L745.6 123.1L737.7 124M803.3 148L793.2 140.3L782.9 134.1L772.4 129.3L762 126L751.6 124.4L741.6 124.2L731.9 125.6M809.2 145.8L797.7 138.7L785.8 133L773.7 128.8L761.7 126.1L749.7 125L738 125.5L726.7 127.4L716 130.8M814 143.3L801.2 136.9L788.1 131.8L774.8 128.3L761.4 126.3L748.1 125.8L735.1 126.8L722.6 129.4L710.6 133.3M817.3 140.7L803.8 134.9L789.8 130.6L775.6 127.7L761.2 126.4L747 126.6L733 128.3L719.4 131.5L706.4 136.1M819.3 138.1L805.3 133L790.8 129.3L776.1 127.2L761.1 126.5L746.2 127.4L731.6 129.8L717.4 133.7L703.7 139M819.8 135.4L805.7 131L791.2 128L776.2 126.6L761.1 126.6L746 128.2L731.1 131.3L716.5 135.9L702.6 141.9M818.8 132.8L805.1 129.1L790.8 126.8L776.1 126L761.1 126.8L746.2 129.1L731.4 132.8L716.9 138.1L703 144.8M816.5 130.4L803.4 127.3L789.7 125.6L775.6 125.5L761.2 126.9L746.8 129.8L732.5 134.3L718.6 140.2L705.1 147.5M812.9 128.2L800.7 125.6L787.9 124.5L774.8 125L761.4 127L747.9 130.6L734.5 135.6L721.4 142.2L708.7 150.1M808 126.2L797.1 124.1L785.6 123.6L773.7 124.6L761.6 127.1L749.4 131.2L737.3 136.9L725.3 144L713.8 152.5M802.1 124.5L792.6 122.9L782.7 122.8L772.4 124.2L761.9 127.2L751.3 131.8L740.8 137.9L730.4 145.5L720.3 154.5M787.5 121.9L779.3 122.1L770.9 123.9L762.3 127.3L753.6 132.2L744.9 138.7L736.3 146.7L727.9 156.1M781.7 121.1L775.6 121.6L769.2 123.7L762.7 127.3L756.1 132.6L749.5 139.3L742.9 147.6L736.6 157.3M775.5 120.7L771.5 121.3L767.4 123.5L763.1 127.3L758.8 132.8L754.5 139.7L750.2 148.2L746 158.1M769.1 120.5L767.3 121.2L765.4 123.5L763.5 127.4L761.6 132.8L759.7 139.8L757.8 148.4L756 158.3M762.5 120.7L763 121.3L763.5 123.5L764 127.3L764.5 132.8L765.1 139.7L765.6 148.2L766.1 158M755.9 121.1L758.7 121.6L761.5 123.7L764.4 127.3L767.4 132.5L770.4 139.3L773.3 147.6L776.2 157.3M749.5 121.9L754.5 122.1L759.6 123.9L764.9 127.3L770.2 132.2L775.5 138.7L780.8 146.7L785.9 156.1M743.5 122.9L750.5 122.8L757.8 124.2L765.3 127.2L772.8 131.8L780.3 137.9L787.8 145.4L795 154.4M729.4 126.3L738 124.2L746.9 123.6L756.2 124.6L765.6 127.1L775.2 131.2L784.7 136.8L794.1 143.9L803.2 152.4M722.9 128.3L733.1 125.7L743.7 124.6L754.7 125L766 127L777.3 130.5L788.5 135.6L799.6 142.1L810.3 150M717.3 130.5L728.9 127.3L741 125.7L753.5 125.5L766.2 126.9L779 129.8L791.7 134.2L804.1 140.1L816.1 147.4M712.9 132.9L725.7 129.2L738.9 126.9L752.6 126L766.5 126.8L780.4 129L794.1 132.8L807.5 138L820.5 144.7M709.8 135.5L723.4 131.1L737.5 128.1L751.9 126.6L766.6 126.6L781.3 128.2L795.7 131.3L809.8 135.8L823.4 141.8M708 138.1L722.1 133L736.7 129.4L751.6 127.2L766.7 126.5L781.7 127.4L796.5 129.7L810.9 133.6L824.7 138.9M707.7 140.8L721.9 135L736.6 130.6L751.6 127.8L766.7 126.4L781.7 126.6L796.5 128.2L810.8 131.4L824.5 136M708.8 143.4L722.8 136.9L737.2 131.9L751.9 128.3L766.6 126.3L781.2 125.8L795.6 126.8L809.4 129.3L822.7 133.3M708.9 143.4L711.5 145.9L715.5 148.2L720.9 150.1L727.4 151.8L734.9 153.1L743.3 154L752.2 154.4L761.4 154.4L770.6 153.9L779.7 153L788.3 151.7L796.3 150L803.3 148L809.2 145.8L814 143.3L817.3 140.7L819.3 138.1L819.8 135.4L818.8 132.8L816.5 130.4L812.9 128.2L808 126.2L802.1 124.5M722.9 128.3L717.3 130.5L712.9 132.9L709.8 135.5L708 138.1L707.7 140.8L708.8 143.4M722.8 137L724.8 138.8L727.9 140.4L731.9 141.9L736.8 143.1L742.4 144L748.6 144.7L755.2 145L762 145L768.9 144.7L775.6 144L782.1 143L788 141.8L793.2 140.3L797.7 138.7L801.2 136.9L803.8 134.9L805.3 133L805.7 131L805.1 129.1L803.4 127.3L800.7 125.6L797.1 124.1L792.6 122.9L787.5 121.9L781.7 121.1L775.5 120.7M755.9 121.1L749.5 121.9L743.5 122.9L738 124.2L733.1 125.7L728.9 127.3L725.7 129.2L723.4 131.1L722.1 133L721.9 135L722.8 136.9M737.2 131.9L738.6 133.1L740.6 134.1L743.2 135.1L746.3 135.8L750 136.4L754 136.8L758.2 137.1L762.7 137L767.1 136.8L771.5 136.4L775.6 135.8L779.5 135L782.9 134.1L785.8 133L788.1 131.8L789.8 130.6L790.8 129.3L791.2 128L790.8 126.8L789.7 125.6L787.9 124.5L785.6 123.6L782.7 122.8L779.3 122.1L775.6 121.6L771.5 121.3L767.3 121.2L763 121.3L758.7 121.6L754.5 122.1L750.5 122.8L746.9 123.6L743.7 124.6L741 125.7L738.9 126.9L737.5 128.1L736.7 129.4L736.6 130.6L737.2 131.9M751.9 128.3L752.5 128.8L753.4 129.3L754.6 129.7L756 130.1L757.6 130.3L759.4 130.5L761.4 130.6L763.3 130.6L765.3 130.5L767.3 130.3L769.2 130.1L770.9 129.7L772.4 129.3L773.7 128.8L774.8 128.3L775.6 127.7L776.1 127.2L776.2 126.6L776.1 126L775.6 125.5L774.8 125L773.7 124.6L772.4 124.2L770.9 123.9L769.2 123.7L767.4 123.5L765.4 123.5L763.5 123.5L761.5 123.7L759.6 123.9L757.8 124.2L756.2 124.6L754.7 125L753.5 125.5L752.6 126L751.9 126.6L751.6 127.2L751.6 127.8L751.9 128.3M766.6 126.3L766.5 126.1L766.3 126L766 125.9L765.7 125.9L765.3 125.8L764.9 125.8L764.5 125.7L764 125.7L763.6 125.8L763.1 125.8L762.7 125.9L762.3 125.9L762 126L761.7 126.1L761.4 126.3L761.2 126.4L761.1 126.5L761.1 126.6L761.1 126.8L761.2 126.9L761.4 127L761.6 127.1L761.9 127.2L762.3 127.3L762.7 127.3L763.1 127.3L763.5 127.4L764 127.3L764.4 127.3L764.9 127.3L765.3 127.2L765.6 127.1L766 127L766.2 126.9L766.5 126.8L766.6 126.6L766.7 126.5L766.7 126.4L766.6 126.3M781.2 125.7L780.3 125L779 124.3L777.2 123.7L775.2 123.2L772.8 122.9L770.2 122.6L767.5 122.5L764.7 122.5L761.8 122.6L759 122.9L756.4 123.3L753.9 123.8L751.6 124.4L749.7 125L748.1 125.8L747 126.6L746.2 127.4L746 128.2L746.2 129.1L746.8 129.8L747.9 130.6L749.4 131.2L751.3 131.8L753.6 132.2L756.1 132.6L758.8 132.8L761.6 132.8L764.5 132.8L767.4 132.5L770.2 132.2L772.8 131.8L775.2 131.2L777.3 130.5L779 129.8L780.4 129L781.3 128.2L781.7 127.4L781.7 126.6L781.2 125.8M795.5 126.7L793.8 125.4L791.4 124.2L788.2 123.1L784.4 122.2L780.1 121.5L775.4 121L770.5 120.8L765.3 120.8L760.1 121.1L755.1 121.5L750.2 122.2L745.6 123.1L741.6 124.2L738 125.5L735.1 126.8L733 128.3L731.6 129.8L731.1 131.3L731.4 132.8L732.5 134.3L734.5 135.6L737.3 136.9L740.8 137.9L744.9 138.7L749.5 139.3L754.5 139.7L759.7 139.8L765.1 139.7L770.4 139.3L775.5 138.7L780.3 137.9L784.7 136.8L788.5 135.6L791.7 134.2L794.1 132.8L795.7 131.3L796.5 129.7L796.5 128.2L795.6 126.8M809.4 129.3L806.9 127.3L803.3 125.5L798.7 124L793.3 122.7L787.2 121.7M737.7 124L731.9 125.6L726.7 127.4L722.6 129.4L719.4 131.5L717.4 133.7L716.5 135.9L716.9 138.1L718.6 140.2L721.4 142.2L725.3 144L730.4 145.5L736.3 146.7L742.9 147.6L750.2 148.2L757.8 148.4L765.6 148.2L773.3 147.6L780.8 146.7L787.8 145.4L794.1 143.9L799.6 142.1L804.1 140.1L807.5 138L809.8 135.8L810.9 133.6L810.8 131.4L809.4 129.3M822.6 133.2L819.3 130.7L814.7 128.4L808.7 126.4M716 130.8L710.6 133.3L706.4 136.1L703.7 139L702.6 141.9L703 144.8L705.1 147.5L708.7 150.1L713.8 152.5L720.3 154.5L727.9 156.1L736.6 157.3L746 158.1L756 158.3L766.1 158L776.2 157.3L785.9 156.1L795 154.4L803.2 152.4L810.3 150L816.1 147.4L820.5 144.7L823.4 141.8L824.7 138.9L824.5 136L822.7 133.3" fill="none" stroke="#007800" stroke-opacity="0.9" stroke-width="0.6"/>
<path class="ax" d="M593.3 103L613.4 352.4L659.3 461.3L928.5 416M612.5 341.3L597 343.5M656.7 455.2L639.5 458M673.5 458.9L676.8 466.4M611.6 330L596 332.2M654.2 449.1L637 451.9M687.6 456.6L691 464M610.7 318.7L595 320.8M651.6 443.1L634.6 445.9M701.6 454.2L705.1 461.6M609.7 307.1L594 309.3M649.1 437.2L632.2 439.9M715.5 451.9L719.1 459.2M608.8 295.5L582.8 299M646.7 431.3L619 435.8M729.3 449.5L735.3 461.2M607.8 283.7L591.9 285.8M644.2 425.6L627.5 428.3M743.1 447.2L746.9 454.5M606.9 271.8L590.9 273.9M641.9 419.9L625.2 422.5M756.8 444.9L760.7 452.2M605.9 259.7L589.8 261.8M639.5 414.3L623 416.9M770.5 442.6L774.5 449.8M604.9 247.5L588.7 249.6M637.2 408.8L620.7 411.3M784 440.3L788.1 447.5M603.9 235.2L577.1 238.5M634.8 403.3L608.1 407.5M797.5 438.1L804.2 449.4M602.9 222.7L586.5 224.7M632.6 397.9L616.4 400.4M810.9 435.8L815.2 442.9M601.9 210L585.4 212M630.3 392.6L614.2 395.1M824.3 433.6L828.7 440.6M600.9 197.2L584.2 199.1M628.1 387.3L612.1 389.8M837.5 431.3L842.1 438.4M599.8 184.2L583.1 186.1M625.9 382.2L610 384.6M850.7 429.1L855.4 436.1M598.8 171.1L571.1 174.2M623.8 377L597.8 381M863.9 426.9L871.4 438M597.7 157.8L580.7 159.7M621.6 372L605.9 374.4M876.9 424.7L881.8 431.6M596.6 144.4L579.5 146.2M619.5 367L603.9 369.3M889.9 422.5L894.8 429.4M595.5 130.7L578.3 132.5M617.5 362.1L601.9 364.4M902.9 420.4L907.9 427.2M594.4 117L577.1 118.7M615.4 357.2L600 359.5M915.7 418.2L920.8 425"/>
<text class="lb" x="564.5" y="181.1" text-anchor="end">0.5</text>
<text class="lb" x="570.6" y="245.3" text-anchor="end">0</text>
<text class="lb" x="576.5" y="306.8" text-anchor="end">-0.5</text>
<text class="lb" x="591.8" y="386.8" text-anchor="end">0.5</text>
<text class="lb" x="601.6" y="414" text-anchor="end">0</text>
<text class="lb" x="612.6" y="443.5" text-anchor="end">-0.5</text>
<text class="lb" x="737.1" y="479.8" text-anchor="middle">-0.5</text>
<text class="lb" x="806" y="467.4" text-anchor="middle">0</text>
<text class="lb" x="873.6" y="456.8" text-anchor="middle">0.5</text>
<text class="lb" style="font-size:15.5px" text-anchor="middle" transform="translate(533.5 243.3) rotate(-88)">Z axis</text>
<text class="lb" style="font-size:15.5px" text-anchor="middle" transform="translate(549.5 419.5) rotate(64)">Y axis</text>
<text class="lb" style="font-size:15.5px" text-anchor="middle" transform="translate(826.6 494.5) rotate(-9.4)">X axis</text>
<text x="763" y="62.5" text-anchor="middle" style="font-family:'Liberation Sans',sans-serif;font-size:20px;fill:#0000f0">Sphere</text>
<path d="M475.5 500.5L486.5 489.5M480.5 500.5L486.5 494.5M1026.5 501.5L1038.5 489.5M1030.5 501.5L1038.5 493.5M1034.5 501.5L1038.5 497.5" stroke="#a0a0a0" stroke-width="1" fill="none"/>
</svg>
</body></html>
